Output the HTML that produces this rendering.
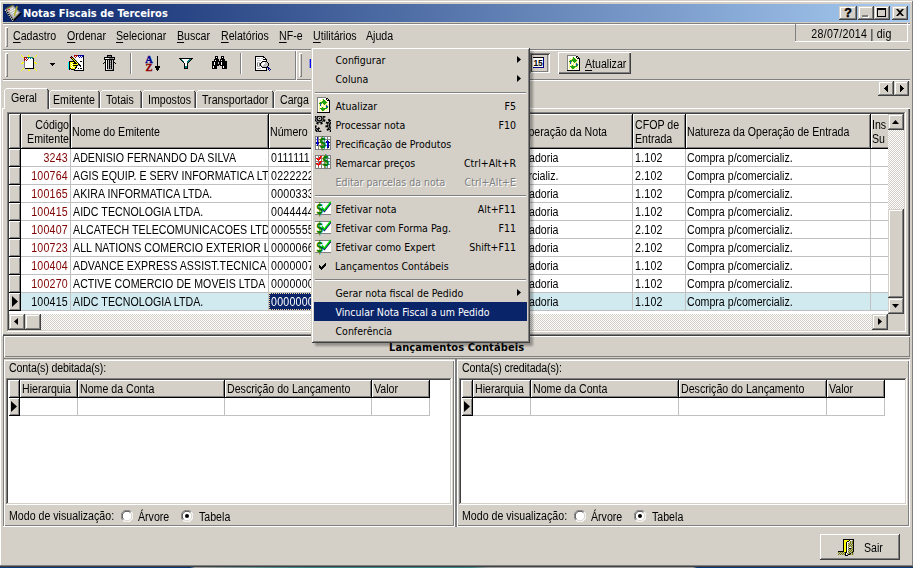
<!DOCTYPE html><html><head><meta charset="utf-8"><title>Notas Fiscais de Terceiros</title><style>
html,body{margin:0;padding:0;background:#d4d0c8;}
body{width:913px;height:568px;position:relative;overflow:hidden;font:11px "Liberation Sans",sans-serif;color:#000;}
div{position:absolute;box-sizing:border-box;white-space:nowrap;}
.ms{font:12px/13px "Liberation Sans",sans-serif;transform:scaleX(.885);transform-origin:0 0;}
.ms.r{transform-origin:100% 0;}
.ms.c{transform-origin:50% 0;}
.th{font:10.5px/13px "DejaVu Sans Condensed","DejaVu Sans",sans-serif;}
.thb{font:bold 11px/13px "DejaVu Sans Condensed","DejaVu Sans",sans-serif;}
.btn{background:#d4d0c8;box-shadow:inset -1px -1px #404040,inset 1px 1px #fff,inset -2px -2px #808080,inset 2px 2px #d4d0c8;}
.sbtn{background:#d4d0c8;box-shadow:inset -1px -1px #404040,inset 1px 1px #d4d0c8,inset -2px -2px #808080,inset 2px 2px #fff;}
.sunk{box-shadow:inset -1px -1px #fff,inset 1px 1px #808080,inset -2px -2px #d4d0c8,inset 2px 2px #404040;}
.sunk1{box-shadow:inset -1px -1px #fff,inset 1px 1px #808080;}
.rais1{box-shadow:inset -1px -1px #808080,inset 1px 1px #fff;}
.dither{background-color:#fff;background-image:conic-gradient(#d4d0c8 25%,#fff 0 50%,#d4d0c8 0 75%,#fff 0);background-size:2px 2px;}
.hc{background:#d4d0c8;box-shadow:inset 1px 1px #fff,inset -1px -1px #808080;}
u{text-decoration:underline;text-underline-offset:2px;}
</style></head><body>
<div style="left:0px;top:1px;width:912px;height:1px;background:#fff;"></div>
<div style="left:0px;top:1px;width:1px;height:564px;background:#fff;"></div>
<div style="left:912px;top:1px;width:1px;height:565px;background:#808080;"></div>
<div style="left:0px;top:565px;width:913px;height:1px;background:#808080;"></div>
<div style="left:0px;top:566px;width:913px;height:1px;background:#404040;"></div>
<div style="left:0px;top:567px;width:913px;height:1px;background:linear-gradient(90deg,#0a3a7a 0,#0a3a7a 190px,#a0a0a0 195px,#3a8a8a 300px,#3a8a8a 470px,#a0a0a0 490px,#a0a0a0 693px,#0a3a7a 697px);"></div>
<div style="left:3px;top:4px;width:907px;height:18px;background:linear-gradient(90deg,#0a246a,#a6caf0);"></div>
<div class="thb" style="left:23px;top:7px;color:#fff;">Notas Fiscais de Terceiros</div>
<svg style="position:absolute;left:4px;top:4px" width="18" height="18" viewBox="4 4 18 18"><polygon points="5,9.3 13,5 21,13 13.2,21" fill="#8c8c8c"/><polygon points="7,9.5 13,6.3 19.3,12.8 13.3,18.6" fill="#b8b8b8"/><path d="M8.5 10.5L13 8M10 12l5-2.8M11.5 13.6l5-2.8M13 15.2l4.6-2.6" stroke="#fff" stroke-width="0.9"/><path d="M13.2 21L21 13" stroke="#000" stroke-width="1.6"/><path d="M5.3 9.8L13 20.6" stroke="#000" stroke-width="1.8"/><path d="M5.3 9.8L13 20.6" stroke="#fff" stroke-width="1.6" stroke-dasharray="1 1.1"/><path d="M6 8.6L13 5" stroke="#707000" stroke-width="1"/><path d="M17.2 6.2L14.3 15.8" stroke="#b0b020" stroke-width="1.5"/><rect x="8" y="9" width="2" height="1.2" fill="#ff3030"/></svg>
<div class="sbtn" style="left:839px;top:6px;width:18px;height:14px;"></div>
<div class="sbtn" style="left:858px;top:6px;width:16px;height:14px;"></div>
<div class="sbtn" style="left:874px;top:6px;width:16px;height:14px;"></div>
<div class="sbtn" style="left:892px;top:6px;width:16px;height:14px;"></div>
<div class="x" style="left:839px;top:6px;font:bold 12.5px/14px Liberation Sans,sans-serif;width:18px;text-align:center;-webkit-text-stroke:0.4px #000;">?</div>
<div style="left:863px;top:16px;width:6px;height:2px;background:#fff;"></div>
<div style="left:862px;top:15px;width:6px;height:2px;background:#808080;"></div>
<div style="left:877px;top:8px;width:9px;height:9px;border:1px solid #000;border-top-width:2px;"></div>
<svg style="position:absolute;left:896px;top:9px" width="8" height="7" viewBox="0 0 8 7"><path d="M0 0h2l2 2 2-2h2v0L5 3.5 8 7H6L4 5 2 7H0l3-3.5z" fill="#000"/></svg>
<div style="left:3px;top:23px;width:907px;height:1px;background:#808080;"></div>
<div style="left:3px;top:24px;width:907px;height:1px;background:#fff;"></div>
<div style="left:5px;top:27px;width:3px;height:20px;box-shadow:inset 1px 1px #fff,inset -1px -1px #808080;"></div>
<div class="ms" style="left:13px;top:30px;"><u>C</u>adastro</div>
<div class="ms" style="left:67px;top:30px;"><u>O</u>rdenar</div>
<div class="ms" style="left:116px;top:30px;"><u>S</u>elecionar</div>
<div class="ms" style="left:177px;top:30px;"><u>B</u>uscar</div>
<div class="ms" style="left:221px;top:30px;"><u>R</u>elatórios</div>
<div class="ms" style="left:279px;top:30px;"><u>N</u>F-e</div>
<div class="ms" style="left:313px;top:30px;"><u>U</u>tilitários</div>
<div class="ms" style="left:366px;top:30px;">Ajuda</div>
<div class="sunk1" style="left:795px;top:23px;width:113px;height:19px;"></div>
<div class="ms c" style="left:795px;top:28px;width:113px;text-align:center;letter-spacing:0.3px;">28/07/2014 | dig</div>
<div style="left:3px;top:49px;width:907px;height:1px;background:#808080;"></div>
<div style="left:3px;top:50px;width:907px;height:1px;background:#fff;"></div>
<div style="left:5px;top:53px;width:3px;height:24px;box-shadow:inset 1px 1px #fff,inset -1px -1px #808080;"></div>
<div style="left:3px;top:79px;width:907px;height:1px;background:#808080;"></div>
<div style="left:3px;top:80px;width:907px;height:1px;background:#fff;"></div>
<svg style="position:absolute;left:21px;top:55px" width="16" height="16" viewBox="0 0 16 16" shape-rendering="crispEdges"><rect x="0" y="0" width="1" height="1" fill="#ffff00"/><rect x="7" y="0" width="1" height="1" fill="#ffff00"/><rect x="15" y="0" width="1" height="1" fill="#ffff00"/><rect x="1" y="1" width="1" height="1" fill="#ffff00"/><rect x="7" y="1" width="2" height="1" fill="#ffff00"/><rect x="14" y="1" width="1" height="1" fill="#ffff00"/><rect x="2" y="2" width="1" height="1" fill="#ffff00"/><rect x="3" y="2" width="3" height="1" fill="#a00000"/><rect x="6" y="2" width="6" height="1" fill="#008080"/><rect x="12" y="2" width="1" height="1" fill="#ffff00"/><rect x="3" y="3" width="1" height="1" fill="#a00000"/><rect x="4" y="3" width="1" height="1" fill="#fff"/><rect x="5" y="3" width="1" height="1" fill="#a00000"/><rect x="6" y="3" width="1" height="1" fill="#fff"/><rect x="7" y="3" width="1" height="1" fill="#008080"/><rect x="8" y="3" width="1" height="1" fill="#fff"/><rect x="9" y="3" width="1" height="1" fill="#008080"/><rect x="10" y="3" width="1" height="1" fill="#fff"/><rect x="11" y="3" width="1" height="1" fill="#008080"/><rect x="12" y="3" width="1" height="1" fill="#000"/><rect x="3" y="4" width="2" height="1" fill="#a00000"/><rect x="5" y="4" width="1" height="1" fill="#fff"/><rect x="6" y="4" width="1" height="1" fill="#a00000"/><rect x="7" y="4" width="5" height="1" fill="#fff"/><rect x="12" y="4" width="1" height="1" fill="#000"/><rect x="3" y="5" width="1" height="1" fill="#a00000"/><rect x="4" y="5" width="1" height="1" fill="#fff"/><rect x="5" y="5" width="1" height="1" fill="#a00000"/><rect x="6" y="5" width="6" height="1" fill="#fff"/><rect x="12" y="5" width="1" height="1" fill="#000"/><rect x="3" y="6" width="1" height="1" fill="#808080"/><rect x="4" y="6" width="8" height="1" fill="#fff"/><rect x="12" y="6" width="1" height="1" fill="#000"/><rect x="1" y="7" width="2" height="1" fill="#ffff00"/><rect x="3" y="7" width="1" height="1" fill="#808080"/><rect x="4" y="7" width="8" height="1" fill="#fff"/><rect x="12" y="7" width="1" height="1" fill="#000"/><rect x="13" y="7" width="2" height="1" fill="#ffff00"/><rect x="0" y="8" width="2" height="1" fill="#ffff00"/><rect x="3" y="8" width="1" height="1" fill="#808080"/><rect x="4" y="8" width="8" height="1" fill="#fff"/><rect x="12" y="8" width="1" height="1" fill="#000"/><rect x="14" y="8" width="2" height="1" fill="#ffff00"/><rect x="3" y="9" width="1" height="1" fill="#808080"/><rect x="4" y="9" width="8" height="1" fill="#fff"/><rect x="12" y="9" width="1" height="1" fill="#000"/><rect x="3" y="10" width="1" height="1" fill="#808080"/><rect x="4" y="10" width="8" height="1" fill="#fff"/><rect x="12" y="10" width="1" height="1" fill="#000"/><rect x="3" y="11" width="1" height="1" fill="#808080"/><rect x="4" y="11" width="8" height="1" fill="#fff"/><rect x="12" y="11" width="1" height="1" fill="#000"/><rect x="3" y="12" width="1" height="1" fill="#808080"/><rect x="4" y="12" width="8" height="1" fill="#fff"/><rect x="12" y="12" width="1" height="1" fill="#000"/><rect x="2" y="13" width="1" height="1" fill="#ffff00"/><rect x="4" y="13" width="9" height="1" fill="#000"/><rect x="13" y="13" width="1" height="1" fill="#ffff00"/><rect x="1" y="14" width="1" height="1" fill="#ffff00"/><rect x="7" y="14" width="1" height="1" fill="#ffff00"/><rect x="14" y="14" width="1" height="1" fill="#ffff00"/><rect x="0" y="15" width="1" height="1" fill="#ffff00"/><rect x="7" y="15" width="2" height="1" fill="#ffff00"/><rect x="15" y="15" width="1" height="1" fill="#ffff00"/></svg>
<svg style="position:absolute;left:50px;top:63px" width="5" height="3" viewBox="0 0 5 3" shape-rendering="crispEdges"><rect x="0" y="0" width="5" height="1" fill="#000"/><rect x="1" y="1" width="3" height="1" fill="#000"/><rect x="2" y="2" width="1" height="1" fill="#000"/></svg>
<svg style="position:absolute;left:68px;top:55px" width="16" height="16" viewBox="0 0 16 16" shape-rendering="crispEdges"><rect x="6" y="0" width="4" height="1" fill="#a00000"/><rect x="10" y="0" width="6" height="1" fill="#0000a0"/><rect x="3" y="1" width="1" height="1" fill="#000"/><rect x="6" y="1" width="1" height="1" fill="#a00000"/><rect x="7" y="1" width="1" height="1" fill="#fff"/><rect x="8" y="1" width="1" height="1" fill="#a00000"/><rect x="9" y="1" width="1" height="1" fill="#fff"/><rect x="10" y="1" width="1" height="1" fill="#0000a0"/><rect x="11" y="1" width="1" height="1" fill="#fff"/><rect x="12" y="1" width="1" height="1" fill="#0000a0"/><rect x="13" y="1" width="1" height="1" fill="#fff"/><rect x="14" y="1" width="1" height="1" fill="#0000a0"/><rect x="15" y="1" width="1" height="1" fill="#000"/><rect x="2" y="2" width="1" height="1" fill="#000"/><rect x="3" y="2" width="1" height="1" fill="#ff0000"/><rect x="4" y="2" width="1" height="1" fill="#000"/><rect x="6" y="2" width="1" height="1" fill="#fff"/><rect x="7" y="2" width="1" height="1" fill="#a00000"/><rect x="8" y="2" width="3" height="1" fill="#fff"/><rect x="11" y="2" width="1" height="1" fill="#0000a0"/><rect x="12" y="2" width="1" height="1" fill="#fff"/><rect x="13" y="2" width="1" height="1" fill="#0000a0"/><rect x="14" y="2" width="1" height="1" fill="#fff"/><rect x="15" y="2" width="1" height="1" fill="#000"/><rect x="3" y="3" width="1" height="1" fill="#000"/><rect x="4" y="3" width="1" height="1" fill="#ffff00"/><rect x="5" y="3" width="1" height="1" fill="#000"/><rect x="7" y="3" width="8" height="1" fill="#fff"/><rect x="15" y="3" width="1" height="1" fill="#000"/><rect x="4" y="4" width="1" height="1" fill="#000"/><rect x="5" y="4" width="1" height="1" fill="#ffff00"/><rect x="6" y="4" width="1" height="1" fill="#000"/><rect x="8" y="4" width="7" height="1" fill="#fff"/><rect x="15" y="4" width="1" height="1" fill="#000"/><rect x="5" y="5" width="1" height="1" fill="#000"/><rect x="6" y="5" width="1" height="1" fill="#ffff00"/><rect x="7" y="5" width="1" height="1" fill="#000"/><rect x="9" y="5" width="6" height="1" fill="#fff"/><rect x="15" y="5" width="1" height="1" fill="#000"/><rect x="1" y="6" width="6" height="1" fill="#000"/><rect x="7" y="6" width="1" height="1" fill="#ffff00"/><rect x="8" y="6" width="1" height="1" fill="#000"/><rect x="9" y="6" width="3" height="1" fill="#fff"/><rect x="12" y="6" width="2" height="1" fill="#000"/><rect x="14" y="6" width="1" height="1" fill="#fff"/><rect x="15" y="6" width="1" height="1" fill="#000"/><rect x="0" y="7" width="1" height="1" fill="#00ffff"/><rect x="1" y="7" width="1" height="1" fill="#000"/><rect x="2" y="7" width="4" height="1" fill="#ffff00"/><rect x="6" y="7" width="2" height="1" fill="#000"/><rect x="8" y="7" width="1" height="1" fill="#ffff00"/><rect x="9" y="7" width="1" height="1" fill="#000"/><rect x="10" y="7" width="5" height="1" fill="#fff"/><rect x="15" y="7" width="1" height="1" fill="#000"/><rect x="0" y="8" width="1" height="1" fill="#00ffff"/><rect x="1" y="8" width="1" height="1" fill="#000"/><rect x="2" y="8" width="1" height="1" fill="#ffff00"/><rect x="3" y="8" width="1" height="1" fill="#fff"/><rect x="4" y="8" width="1" height="1" fill="#ffff00"/><rect x="5" y="8" width="4" height="1" fill="#000"/><rect x="9" y="8" width="1" height="1" fill="#ffff00"/><rect x="10" y="8" width="1" height="1" fill="#000"/><rect x="11" y="8" width="4" height="1" fill="#fff"/><rect x="15" y="8" width="1" height="1" fill="#000"/><rect x="0" y="9" width="1" height="1" fill="#00ffff"/><rect x="1" y="9" width="1" height="1" fill="#000"/><rect x="2" y="9" width="2" height="1" fill="#ffff00"/><rect x="4" y="9" width="1" height="1" fill="#fff"/><rect x="5" y="9" width="5" height="1" fill="#ffff00"/><rect x="10" y="9" width="2" height="1" fill="#000"/><rect x="12" y="9" width="3" height="1" fill="#fff"/><rect x="15" y="9" width="1" height="1" fill="#000"/><rect x="0" y="10" width="1" height="1" fill="#00ffff"/><rect x="1" y="10" width="1" height="1" fill="#000"/><rect x="2" y="10" width="1" height="1" fill="#ffff00"/><rect x="3" y="10" width="1" height="1" fill="#fff"/><rect x="4" y="10" width="1" height="1" fill="#ffff00"/><rect x="5" y="10" width="5" height="1" fill="#000"/><rect x="11" y="10" width="2" height="1" fill="#000"/><rect x="13" y="10" width="2" height="1" fill="#fff"/><rect x="15" y="10" width="1" height="1" fill="#000"/><rect x="0" y="11" width="1" height="1" fill="#00ffff"/><rect x="1" y="11" width="1" height="1" fill="#000"/><rect x="2" y="11" width="2" height="1" fill="#ffff00"/><rect x="4" y="11" width="1" height="1" fill="#fff"/><rect x="5" y="11" width="3" height="1" fill="#ffff00"/><rect x="8" y="11" width="1" height="1" fill="#000"/><rect x="9" y="11" width="3" height="1" fill="#fff"/><rect x="12" y="11" width="1" height="1" fill="#000"/><rect x="13" y="11" width="2" height="1" fill="#fff"/><rect x="15" y="11" width="1" height="1" fill="#000"/><rect x="0" y="12" width="1" height="1" fill="#00ffff"/><rect x="1" y="12" width="1" height="1" fill="#000"/><rect x="2" y="12" width="1" height="1" fill="#ffff00"/><rect x="3" y="12" width="1" height="1" fill="#fff"/><rect x="4" y="12" width="1" height="1" fill="#ffff00"/><rect x="5" y="12" width="1" height="1" fill="#fff"/><rect x="6" y="12" width="1" height="1" fill="#ffff00"/><rect x="7" y="12" width="2" height="1" fill="#000"/><rect x="9" y="12" width="6" height="1" fill="#fff"/><rect x="15" y="12" width="1" height="1" fill="#000"/><rect x="0" y="13" width="1" height="1" fill="#00ffff"/><rect x="1" y="13" width="2" height="1" fill="#000"/><rect x="3" y="13" width="4" height="1" fill="#ffff00"/><rect x="7" y="13" width="1" height="1" fill="#000"/><rect x="8" y="13" width="2" height="1" fill="#fff"/><rect x="10" y="13" width="1" height="1" fill="#000"/><rect x="11" y="13" width="1" height="1" fill="#fff"/><rect x="12" y="13" width="2" height="1" fill="#000"/><rect x="14" y="13" width="1" height="1" fill="#fff"/><rect x="15" y="13" width="1" height="1" fill="#000"/><rect x="1" y="14" width="1" height="1" fill="#000"/><rect x="3" y="14" width="4" height="1" fill="#000"/><rect x="7" y="14" width="8" height="1" fill="#fff"/><rect x="15" y="14" width="1" height="1" fill="#000"/><rect x="6" y="15" width="10" height="1" fill="#000"/></svg>
<svg style="position:absolute;left:103px;top:55px" width="13" height="16" viewBox="0 0 13 16" shape-rendering="crispEdges"><rect x="4" y="0" width="5" height="1" fill="#000"/><rect x="4" y="1" width="1" height="1" fill="#000"/><rect x="5" y="1" width="3" height="1" fill="#808080"/><rect x="8" y="1" width="1" height="1" fill="#000"/><rect x="1" y="2" width="11" height="1" fill="#000"/><rect x="1" y="3" width="1" height="1" fill="#000"/><rect x="2" y="3" width="4" height="1" fill="#fff"/><rect x="6" y="3" width="4" height="1" fill="#808080"/><rect x="10" y="3" width="1" height="1" fill="#c0c0c0"/><rect x="11" y="3" width="1" height="1" fill="#000"/><rect x="1" y="4" width="11" height="1" fill="#000"/><rect x="2" y="5" width="1" height="1" fill="#000"/><rect x="3" y="5" width="1" height="1" fill="#fff"/><rect x="4" y="5" width="1" height="1" fill="#000"/><rect x="5" y="5" width="1" height="1" fill="#c0c0c0"/><rect x="6" y="5" width="1" height="1" fill="#000"/><rect x="7" y="5" width="1" height="1" fill="#808080"/><rect x="8" y="5" width="1" height="1" fill="#000"/><rect x="9" y="5" width="1" height="1" fill="#c0c0c0"/><rect x="10" y="5" width="1" height="1" fill="#000"/><rect x="2" y="6" width="1" height="1" fill="#000"/><rect x="3" y="6" width="1" height="1" fill="#fff"/><rect x="4" y="6" width="1" height="1" fill="#000"/><rect x="5" y="6" width="1" height="1" fill="#c0c0c0"/><rect x="6" y="6" width="1" height="1" fill="#000"/><rect x="7" y="6" width="1" height="1" fill="#c0c0c0"/><rect x="8" y="6" width="1" height="1" fill="#000"/><rect x="9" y="6" width="1" height="1" fill="#c0c0c0"/><rect x="10" y="6" width="1" height="1" fill="#000"/><rect x="1" y="7" width="2" height="1" fill="#000"/><rect x="3" y="7" width="1" height="1" fill="#fff"/><rect x="4" y="7" width="1" height="1" fill="#000"/><rect x="5" y="7" width="1" height="1" fill="#c0c0c0"/><rect x="6" y="7" width="1" height="1" fill="#000"/><rect x="7" y="7" width="1" height="1" fill="#808080"/><rect x="8" y="7" width="1" height="1" fill="#000"/><rect x="9" y="7" width="1" height="1" fill="#c0c0c0"/><rect x="10" y="7" width="2" height="1" fill="#000"/><rect x="0" y="8" width="1" height="1" fill="#000"/><rect x="2" y="8" width="1" height="1" fill="#000"/><rect x="3" y="8" width="1" height="1" fill="#fff"/><rect x="4" y="8" width="1" height="1" fill="#000"/><rect x="5" y="8" width="1" height="1" fill="#c0c0c0"/><rect x="6" y="8" width="1" height="1" fill="#000"/><rect x="7" y="8" width="1" height="1" fill="#c0c0c0"/><rect x="8" y="8" width="1" height="1" fill="#000"/><rect x="9" y="8" width="1" height="1" fill="#c0c0c0"/><rect x="10" y="8" width="1" height="1" fill="#000"/><rect x="12" y="8" width="1" height="1" fill="#000"/><rect x="2" y="9" width="1" height="1" fill="#000"/><rect x="3" y="9" width="1" height="1" fill="#fff"/><rect x="4" y="9" width="1" height="1" fill="#000"/><rect x="5" y="9" width="1" height="1" fill="#c0c0c0"/><rect x="6" y="9" width="1" height="1" fill="#000"/><rect x="7" y="9" width="1" height="1" fill="#808080"/><rect x="8" y="9" width="1" height="1" fill="#000"/><rect x="9" y="9" width="1" height="1" fill="#c0c0c0"/><rect x="10" y="9" width="1" height="1" fill="#000"/><rect x="2" y="10" width="1" height="1" fill="#000"/><rect x="3" y="10" width="1" height="1" fill="#fff"/><rect x="4" y="10" width="1" height="1" fill="#000"/><rect x="5" y="10" width="1" height="1" fill="#c0c0c0"/><rect x="6" y="10" width="1" height="1" fill="#000"/><rect x="7" y="10" width="1" height="1" fill="#c0c0c0"/><rect x="8" y="10" width="1" height="1" fill="#000"/><rect x="9" y="10" width="1" height="1" fill="#c0c0c0"/><rect x="10" y="10" width="1" height="1" fill="#000"/><rect x="2" y="11" width="1" height="1" fill="#000"/><rect x="3" y="11" width="1" height="1" fill="#fff"/><rect x="4" y="11" width="1" height="1" fill="#000"/><rect x="5" y="11" width="1" height="1" fill="#c0c0c0"/><rect x="6" y="11" width="1" height="1" fill="#000"/><rect x="7" y="11" width="1" height="1" fill="#808080"/><rect x="8" y="11" width="1" height="1" fill="#000"/><rect x="9" y="11" width="1" height="1" fill="#c0c0c0"/><rect x="10" y="11" width="1" height="1" fill="#000"/><rect x="2" y="12" width="1" height="1" fill="#000"/><rect x="3" y="12" width="1" height="1" fill="#fff"/><rect x="4" y="12" width="1" height="1" fill="#000"/><rect x="5" y="12" width="1" height="1" fill="#c0c0c0"/><rect x="6" y="12" width="1" height="1" fill="#000"/><rect x="7" y="12" width="1" height="1" fill="#c0c0c0"/><rect x="8" y="12" width="1" height="1" fill="#000"/><rect x="9" y="12" width="1" height="1" fill="#c0c0c0"/><rect x="10" y="12" width="1" height="1" fill="#000"/><rect x="2" y="13" width="1" height="1" fill="#000"/><rect x="3" y="13" width="1" height="1" fill="#fff"/><rect x="4" y="13" width="1" height="1" fill="#000"/><rect x="5" y="13" width="1" height="1" fill="#c0c0c0"/><rect x="6" y="13" width="1" height="1" fill="#000"/><rect x="7" y="13" width="1" height="1" fill="#808080"/><rect x="8" y="13" width="1" height="1" fill="#000"/><rect x="9" y="13" width="1" height="1" fill="#c0c0c0"/><rect x="10" y="13" width="1" height="1" fill="#000"/><rect x="2" y="14" width="1" height="1" fill="#000"/><rect x="3" y="14" width="1" height="1" fill="#fff"/><rect x="4" y="14" width="5" height="1" fill="#c0c0c0"/><rect x="9" y="14" width="1" height="1" fill="#808080"/><rect x="10" y="14" width="1" height="1" fill="#000"/><rect x="2" y="15" width="9" height="1" fill="#000"/></svg>
<div style="left:130px;top:53px;width:1px;height:21px;background:#808080;"></div>
<div style="left:131px;top:53px;width:1px;height:21px;background:#fff;"></div>
<svg style="position:absolute;left:144px;top:54px;overflow:visible" width="18" height="18" viewBox="0 0 18 18"><text x="1.3" y="8.6" font-family="Liberation Serif,serif" font-weight="bold" font-size="10.5" fill="#000090" stroke="#000090" stroke-width="0.35">A</text><text x="1.6" y="16.6" font-family="Liberation Serif,serif" font-weight="bold" font-size="10.5" fill="#900000" stroke="#900000" stroke-width="0.35">Z</text></svg>
<svg style="position:absolute;left:155px;top:56px" width="5" height="15" viewBox="0 0 5 15" shape-rendering="crispEdges"><rect x="2" y="0" width="1" height="1" fill="#000"/><rect x="2" y="1" width="1" height="1" fill="#000"/><rect x="2" y="2" width="1" height="1" fill="#000"/><rect x="2" y="3" width="1" height="1" fill="#000"/><rect x="2" y="4" width="1" height="1" fill="#000"/><rect x="2" y="5" width="1" height="1" fill="#000"/><rect x="2" y="6" width="1" height="1" fill="#000"/><rect x="2" y="7" width="1" height="1" fill="#000"/><rect x="2" y="8" width="1" height="1" fill="#000"/><rect x="2" y="9" width="1" height="1" fill="#000"/><rect x="0" y="10" width="5" height="1" fill="#000"/><rect x="0" y="11" width="5" height="1" fill="#000"/><rect x="1" y="12" width="3" height="1" fill="#000"/><rect x="1" y="13" width="3" height="1" fill="#000"/><rect x="2" y="14" width="1" height="1" fill="#000"/></svg>
<svg style="position:absolute;left:179px;top:58px" width="14" height="11" viewBox="0 0 14 11" shape-rendering="crispEdges"><rect x="0" y="0" width="14" height="1" fill="#000"/><rect x="1" y="1" width="1" height="1" fill="#000"/><rect x="2" y="1" width="1" height="1" fill="#008080"/><rect x="3" y="1" width="7" height="1" fill="#fff"/><rect x="10" y="1" width="2" height="1" fill="#008080"/><rect x="12" y="1" width="1" height="1" fill="#000"/><rect x="2" y="2" width="1" height="1" fill="#000"/><rect x="3" y="2" width="1" height="1" fill="#008080"/><rect x="4" y="2" width="5" height="1" fill="#fff"/><rect x="9" y="2" width="2" height="1" fill="#008080"/><rect x="11" y="2" width="1" height="1" fill="#000"/><rect x="3" y="3" width="1" height="1" fill="#000"/><rect x="4" y="3" width="1" height="1" fill="#008080"/><rect x="5" y="3" width="3" height="1" fill="#fff"/><rect x="8" y="3" width="2" height="1" fill="#008080"/><rect x="10" y="3" width="1" height="1" fill="#000"/><rect x="4" y="4" width="1" height="1" fill="#000"/><rect x="5" y="4" width="3" height="1" fill="#fff"/><rect x="8" y="4" width="1" height="1" fill="#008080"/><rect x="9" y="4" width="1" height="1" fill="#000"/><rect x="5" y="5" width="1" height="1" fill="#000"/><rect x="6" y="5" width="2" height="1" fill="#fff"/><rect x="8" y="5" width="1" height="1" fill="#000"/><rect x="5" y="6" width="1" height="1" fill="#000"/><rect x="6" y="6" width="2" height="1" fill="#fff"/><rect x="8" y="6" width="1" height="1" fill="#000"/><rect x="5" y="7" width="1" height="1" fill="#000"/><rect x="6" y="7" width="2" height="1" fill="#fff"/><rect x="8" y="7" width="1" height="1" fill="#000"/><rect x="5" y="8" width="1" height="1" fill="#000"/><rect x="6" y="8" width="2" height="1" fill="#008080"/><rect x="8" y="8" width="1" height="1" fill="#000"/><rect x="5" y="9" width="1" height="1" fill="#000"/><rect x="6" y="9" width="2" height="1" fill="#008080"/><rect x="8" y="9" width="1" height="1" fill="#000"/><rect x="5" y="10" width="4" height="1" fill="#000"/></svg>
<svg style="position:absolute;left:212px;top:56px" width="15" height="13" viewBox="0 0 15 13" shape-rendering="crispEdges"><rect x="3" y="0" width="3" height="1" fill="#000"/><rect x="9" y="0" width="3" height="1" fill="#000"/><rect x="3" y="1" width="1" height="1" fill="#000"/><rect x="4" y="1" width="1" height="1" fill="#fff"/><rect x="5" y="1" width="1" height="1" fill="#000"/><rect x="9" y="1" width="1" height="1" fill="#000"/><rect x="10" y="1" width="1" height="1" fill="#fff"/><rect x="11" y="1" width="1" height="1" fill="#000"/><rect x="3" y="2" width="3" height="1" fill="#000"/><rect x="9" y="2" width="3" height="1" fill="#000"/><rect x="2" y="3" width="5" height="1" fill="#000"/><rect x="8" y="3" width="5" height="1" fill="#000"/><rect x="2" y="4" width="1" height="1" fill="#000"/><rect x="3" y="4" width="1" height="1" fill="#fff"/><rect x="4" y="4" width="3" height="1" fill="#000"/><rect x="8" y="4" width="1" height="1" fill="#000"/><rect x="9" y="4" width="1" height="1" fill="#fff"/><rect x="10" y="4" width="3" height="1" fill="#000"/><rect x="0" y="5" width="15" height="1" fill="#000"/><rect x="0" y="6" width="2" height="1" fill="#000"/><rect x="2" y="6" width="1" height="1" fill="#fff"/><rect x="3" y="6" width="3" height="1" fill="#000"/><rect x="6" y="6" width="1" height="1" fill="#c0c0c0"/><rect x="7" y="6" width="2" height="1" fill="#000"/><rect x="9" y="6" width="1" height="1" fill="#fff"/><rect x="10" y="6" width="5" height="1" fill="#000"/><rect x="0" y="7" width="2" height="1" fill="#000"/><rect x="2" y="7" width="1" height="1" fill="#fff"/><rect x="3" y="7" width="3" height="1" fill="#000"/><rect x="6" y="7" width="1" height="1" fill="#c0c0c0"/><rect x="7" y="7" width="2" height="1" fill="#000"/><rect x="9" y="7" width="1" height="1" fill="#fff"/><rect x="10" y="7" width="5" height="1" fill="#000"/><rect x="0" y="8" width="2" height="1" fill="#000"/><rect x="2" y="8" width="1" height="1" fill="#fff"/><rect x="3" y="8" width="6" height="1" fill="#000"/><rect x="9" y="8" width="1" height="1" fill="#fff"/><rect x="10" y="8" width="5" height="1" fill="#000"/><rect x="0" y="9" width="7" height="1" fill="#000"/><rect x="8" y="9" width="7" height="1" fill="#000"/><rect x="0" y="10" width="1" height="1" fill="#000"/><rect x="1" y="10" width="1" height="1" fill="#fff"/><rect x="2" y="10" width="3" height="1" fill="#000"/><rect x="10" y="10" width="1" height="1" fill="#000"/><rect x="11" y="10" width="1" height="1" fill="#fff"/><rect x="12" y="10" width="3" height="1" fill="#000"/><rect x="0" y="11" width="1" height="1" fill="#000"/><rect x="1" y="11" width="1" height="1" fill="#fff"/><rect x="2" y="11" width="3" height="1" fill="#000"/><rect x="10" y="11" width="1" height="1" fill="#000"/><rect x="11" y="11" width="1" height="1" fill="#fff"/><rect x="12" y="11" width="3" height="1" fill="#000"/><rect x="0" y="12" width="5" height="1" fill="#000"/><rect x="10" y="12" width="5" height="1" fill="#000"/></svg>
<div style="left:240px;top:53px;width:1px;height:21px;background:#808080;"></div>
<div style="left:241px;top:53px;width:1px;height:21px;background:#fff;"></div>
<svg style="position:absolute;left:255px;top:56px" width="16" height="15" viewBox="0 0 16 15" shape-rendering="crispEdges"><rect x="0" y="0" width="9" height="1" fill="#000"/><rect x="0" y="1" width="1" height="1" fill="#000"/><rect x="1" y="1" width="7" height="1" fill="#fff"/><rect x="8" y="1" width="2" height="1" fill="#000"/><rect x="0" y="2" width="1" height="1" fill="#000"/><rect x="1" y="2" width="1" height="1" fill="#fff"/><rect x="2" y="2" width="3" height="1" fill="#c0c0c0"/><rect x="5" y="2" width="1" height="1" fill="#fff"/><rect x="6" y="2" width="2" height="1" fill="#c0c0c0"/><rect x="8" y="2" width="2" height="1" fill="#fff"/><rect x="10" y="2" width="1" height="1" fill="#000"/><rect x="0" y="3" width="1" height="1" fill="#000"/><rect x="1" y="3" width="7" height="1" fill="#fff"/><rect x="8" y="3" width="4" height="1" fill="#000"/><rect x="0" y="4" width="1" height="1" fill="#000"/><rect x="1" y="4" width="1" height="1" fill="#fff"/><rect x="2" y="4" width="4" height="1" fill="#c0c0c0"/><rect x="6" y="4" width="5" height="1" fill="#fff"/><rect x="11" y="4" width="1" height="1" fill="#000"/><rect x="0" y="5" width="1" height="1" fill="#000"/><rect x="1" y="5" width="6" height="1" fill="#fff"/><rect x="7" y="5" width="5" height="1" fill="#000"/><rect x="0" y="6" width="1" height="1" fill="#000"/><rect x="1" y="6" width="1" height="1" fill="#fff"/><rect x="2" y="6" width="3" height="1" fill="#c0c0c0"/><rect x="5" y="6" width="1" height="1" fill="#fff"/><rect x="6" y="6" width="1" height="1" fill="#000"/><rect x="7" y="6" width="1" height="1" fill="#c0c0c0"/><rect x="8" y="6" width="2" height="1" fill="#fff"/><rect x="10" y="6" width="2" height="1" fill="#c0c0c0"/><rect x="12" y="6" width="1" height="1" fill="#000"/><rect x="0" y="7" width="1" height="1" fill="#000"/><rect x="1" y="7" width="1" height="1" fill="#fff"/><rect x="2" y="7" width="1" height="1" fill="#808080"/><rect x="3" y="7" width="1" height="1" fill="#fff"/><rect x="4" y="7" width="1" height="1" fill="#808080"/><rect x="5" y="7" width="1" height="1" fill="#000"/><rect x="6" y="7" width="1" height="1" fill="#c0c0c0"/><rect x="7" y="7" width="3" height="1" fill="#fff"/><rect x="10" y="7" width="3" height="1" fill="#c0c0c0"/><rect x="13" y="7" width="1" height="1" fill="#000"/><rect x="0" y="8" width="1" height="1" fill="#000"/><rect x="1" y="8" width="1" height="1" fill="#fff"/><rect x="2" y="8" width="1" height="1" fill="#808080"/><rect x="3" y="8" width="1" height="1" fill="#fff"/><rect x="4" y="8" width="1" height="1" fill="#808080"/><rect x="5" y="8" width="1" height="1" fill="#000"/><rect x="6" y="8" width="3" height="1" fill="#fff"/><rect x="9" y="8" width="4" height="1" fill="#c0c0c0"/><rect x="13" y="8" width="1" height="1" fill="#000"/><rect x="0" y="9" width="1" height="1" fill="#000"/><rect x="1" y="9" width="1" height="1" fill="#fff"/><rect x="2" y="9" width="1" height="1" fill="#808080"/><rect x="3" y="9" width="1" height="1" fill="#fff"/><rect x="4" y="9" width="1" height="1" fill="#808080"/><rect x="5" y="9" width="1" height="1" fill="#000"/><rect x="6" y="9" width="1" height="1" fill="#c0c0c0"/><rect x="7" y="9" width="1" height="1" fill="#fff"/><rect x="8" y="9" width="5" height="1" fill="#c0c0c0"/><rect x="13" y="9" width="1" height="1" fill="#000"/><rect x="0" y="10" width="1" height="1" fill="#000"/><rect x="1" y="10" width="1" height="1" fill="#fff"/><rect x="2" y="10" width="3" height="1" fill="#c0c0c0"/><rect x="5" y="10" width="1" height="1" fill="#fff"/><rect x="6" y="10" width="1" height="1" fill="#000"/><rect x="7" y="10" width="5" height="1" fill="#c0c0c0"/><rect x="12" y="10" width="1" height="1" fill="#000"/><rect x="0" y="11" width="1" height="1" fill="#000"/><rect x="1" y="11" width="6" height="1" fill="#fff"/><rect x="7" y="11" width="5" height="1" fill="#000"/><rect x="12" y="11" width="2" height="1" fill="#000080"/><rect x="0" y="12" width="1" height="1" fill="#000"/><rect x="1" y="12" width="1" height="1" fill="#fff"/><rect x="2" y="12" width="4" height="1" fill="#c0c0c0"/><rect x="6" y="12" width="5" height="1" fill="#fff"/><rect x="11" y="12" width="1" height="1" fill="#000"/><rect x="13" y="12" width="2" height="1" fill="#000080"/><rect x="0" y="13" width="1" height="1" fill="#000"/><rect x="1" y="13" width="10" height="1" fill="#fff"/><rect x="11" y="13" width="1" height="1" fill="#000"/><rect x="13" y="13" width="1" height="1" fill="#000080"/><rect x="15" y="13" width="1" height="1" fill="#000080"/><rect x="0" y="14" width="12" height="1" fill="#000"/><rect x="14" y="14" width="1" height="1" fill="#000080"/></svg>
<div style="left:295px;top:51px;width:1px;height:28px;background:#808080;"></div>
<div style="left:296px;top:51px;width:1px;height:29px;background:#fff;"></div>
<div style="left:299px;top:53px;width:3px;height:24px;box-shadow:inset 1px 1px #fff,inset -1px -1px #808080;"></div>
<div class="ms" style="left:308.5px;top:58px;color:#0000ff;font-weight:bold;">F</div>
<div style="left:530px;top:53px;width:20px;height:20px;box-shadow:inset 1px 1px #808080,inset -1px -1px #fff,inset 2px 2px #404040;"></div>
<div style="left:547px;top:55px;width:1px;height:17px;background:#808080;"></div>
<div style="left:532px;top:71px;width:16px;height:1px;background:#808080;"></div>
<div style="left:533px;top:57px;width:11px;height:11px;background:#fff;border-top:1px solid #000;border-right:1px solid #000080;border-bottom:1px solid #000080;"></div>
<div class="x" style="left:533px;top:59px;font:bold 8.5px/9px Liberation Sans,sans-serif;width:10px;text-align:center;letter-spacing:-0.2px;">15</div>
<div style="left:558px;top:52px;width:73px;height:22px;box-shadow:inset 1px 1px #fff,inset -1px -1px #404040,inset -2px -2px #808080;"></div>
<div class="ms" style="left:585px;top:58px;"><u>A</u>tualizar</div>
<svg style="position:absolute;left:567px;top:55px" width="13" height="16" viewBox="0 0 13 16" shape-rendering="crispEdges"><rect x="0" y="0" width="9" height="1" fill="#808080"/><rect x="0" y="1" width="1" height="1" fill="#808080"/><rect x="1" y="1" width="8" height="1" fill="#fff"/><rect x="9" y="1" width="2" height="1" fill="#000"/><rect x="0" y="2" width="1" height="1" fill="#808080"/><rect x="1" y="2" width="4" height="1" fill="#fff"/><rect x="5" y="2" width="1" height="1" fill="#f4f48c"/><rect x="6" y="2" width="1" height="1" fill="#22a412"/><rect x="7" y="2" width="2" height="1" fill="#fff"/><rect x="9" y="2" width="1" height="1" fill="#000"/><rect x="10" y="2" width="1" height="1" fill="#fff"/><rect x="11" y="2" width="1" height="1" fill="#000"/><rect x="0" y="3" width="1" height="1" fill="#808080"/><rect x="1" y="3" width="2" height="1" fill="#fff"/><rect x="3" y="3" width="1" height="1" fill="#f4f48c"/><rect x="4" y="3" width="1" height="1" fill="#fff"/><rect x="5" y="3" width="1" height="1" fill="#f4f48c"/><rect x="6" y="3" width="2" height="1" fill="#22a412"/><rect x="8" y="3" width="1" height="1" fill="#f4f48c"/><rect x="9" y="3" width="1" height="1" fill="#fff"/><rect x="10" y="3" width="3" height="1" fill="#000"/><rect x="0" y="4" width="1" height="1" fill="#808080"/><rect x="1" y="4" width="1" height="1" fill="#fff"/><rect x="2" y="4" width="1" height="1" fill="#f4f48c"/><rect x="3" y="4" width="1" height="1" fill="#fff"/><rect x="4" y="4" width="1" height="1" fill="#f4f48c"/><rect x="5" y="4" width="4" height="1" fill="#22a412"/><rect x="9" y="4" width="1" height="1" fill="#f4f48c"/><rect x="10" y="4" width="2" height="1" fill="#fff"/><rect x="12" y="4" width="1" height="1" fill="#000"/><rect x="0" y="5" width="1" height="1" fill="#808080"/><rect x="1" y="5" width="1" height="1" fill="#fff"/><rect x="2" y="5" width="1" height="1" fill="#f4f48c"/><rect x="3" y="5" width="7" height="1" fill="#22a412"/><rect x="10" y="5" width="1" height="1" fill="#f4f48c"/><rect x="11" y="5" width="1" height="1" fill="#fff"/><rect x="12" y="5" width="1" height="1" fill="#000"/><rect x="0" y="6" width="1" height="1" fill="#808080"/><rect x="1" y="6" width="1" height="1" fill="#fff"/><rect x="2" y="6" width="1" height="1" fill="#22a412"/><rect x="3" y="6" width="1" height="1" fill="#0a5ca8"/><rect x="4" y="6" width="1" height="1" fill="#22a412"/><rect x="5" y="6" width="1" height="1" fill="#f4f48c"/><rect x="6" y="6" width="3" height="1" fill="#22a412"/><rect x="9" y="6" width="1" height="1" fill="#f4f48c"/><rect x="10" y="6" width="2" height="1" fill="#fff"/><rect x="12" y="6" width="1" height="1" fill="#000"/><rect x="0" y="7" width="1" height="1" fill="#808080"/><rect x="1" y="7" width="1" height="1" fill="#fff"/><rect x="2" y="7" width="1" height="1" fill="#f4f48c"/><rect x="3" y="7" width="1" height="1" fill="#0a5ca8"/><rect x="4" y="7" width="1" height="1" fill="#f4f48c"/><rect x="5" y="7" width="1" height="1" fill="#fff"/><rect x="6" y="7" width="1" height="1" fill="#f4f48c"/><rect x="7" y="7" width="1" height="1" fill="#22a412"/><rect x="8" y="7" width="2" height="1" fill="#f4f48c"/><rect x="10" y="7" width="1" height="1" fill="#fff"/><rect x="11" y="7" width="1" height="1" fill="#f4f48c"/><rect x="12" y="7" width="1" height="1" fill="#000"/><rect x="0" y="8" width="1" height="1" fill="#808080"/><rect x="1" y="8" width="1" height="1" fill="#fff"/><rect x="2" y="8" width="1" height="1" fill="#f4f48c"/><rect x="3" y="8" width="1" height="1" fill="#0a5ca8"/><rect x="4" y="8" width="1" height="1" fill="#f4f48c"/><rect x="5" y="8" width="1" height="1" fill="#fff"/><rect x="6" y="8" width="1" height="1" fill="#f4f48c"/><rect x="7" y="8" width="1" height="1" fill="#fff"/><rect x="8" y="8" width="1" height="1" fill="#f4f48c"/><rect x="9" y="8" width="1" height="1" fill="#0a5ca8"/><rect x="10" y="8" width="1" height="1" fill="#f4f48c"/><rect x="11" y="8" width="1" height="1" fill="#fff"/><rect x="12" y="8" width="1" height="1" fill="#000"/><rect x="0" y="9" width="1" height="1" fill="#808080"/><rect x="1" y="9" width="1" height="1" fill="#fff"/><rect x="2" y="9" width="1" height="1" fill="#f4f48c"/><rect x="3" y="9" width="1" height="1" fill="#fff"/><rect x="4" y="9" width="1" height="1" fill="#f4f48c"/><rect x="5" y="9" width="1" height="1" fill="#fff"/><rect x="6" y="9" width="1" height="1" fill="#f4f48c"/><rect x="7" y="9" width="1" height="1" fill="#fff"/><rect x="8" y="9" width="1" height="1" fill="#f4f48c"/><rect x="9" y="9" width="2" height="1" fill="#0a5ca8"/><rect x="11" y="9" width="1" height="1" fill="#f4f48c"/><rect x="12" y="9" width="1" height="1" fill="#000"/><rect x="0" y="10" width="1" height="1" fill="#808080"/><rect x="1" y="10" width="1" height="1" fill="#fff"/><rect x="2" y="10" width="1" height="1" fill="#f4f48c"/><rect x="3" y="10" width="1" height="1" fill="#fff"/><rect x="4" y="10" width="1" height="1" fill="#f4f48c"/><rect x="5" y="10" width="1" height="1" fill="#22a412"/><rect x="6" y="10" width="1" height="1" fill="#f4f48c"/><rect x="7" y="10" width="1" height="1" fill="#fff"/><rect x="8" y="10" width="1" height="1" fill="#f4f48c"/><rect x="9" y="10" width="1" height="1" fill="#0a5ca8"/><rect x="10" y="10" width="1" height="1" fill="#22a412"/><rect x="11" y="10" width="1" height="1" fill="#fff"/><rect x="12" y="10" width="1" height="1" fill="#000"/><rect x="0" y="11" width="1" height="1" fill="#808080"/><rect x="1" y="11" width="1" height="1" fill="#fff"/><rect x="2" y="11" width="1" height="1" fill="#f4f48c"/><rect x="3" y="11" width="7" height="1" fill="#22a412"/><rect x="10" y="11" width="1" height="1" fill="#f4f48c"/><rect x="11" y="11" width="1" height="1" fill="#fff"/><rect x="12" y="11" width="1" height="1" fill="#000"/><rect x="0" y="12" width="1" height="1" fill="#808080"/><rect x="1" y="12" width="1" height="1" fill="#fff"/><rect x="2" y="12" width="1" height="1" fill="#f4f48c"/><rect x="3" y="12" width="1" height="1" fill="#fff"/><rect x="4" y="12" width="4" height="1" fill="#22a412"/><rect x="8" y="12" width="1" height="1" fill="#f4f48c"/><rect x="9" y="12" width="1" height="1" fill="#fff"/><rect x="10" y="12" width="1" height="1" fill="#f4f48c"/><rect x="11" y="12" width="1" height="1" fill="#fff"/><rect x="12" y="12" width="1" height="1" fill="#000"/><rect x="0" y="13" width="1" height="1" fill="#808080"/><rect x="1" y="13" width="1" height="1" fill="#fff"/><rect x="2" y="13" width="1" height="1" fill="#f4f48c"/><rect x="3" y="13" width="1" height="1" fill="#fff"/><rect x="4" y="13" width="1" height="1" fill="#f4f48c"/><rect x="5" y="13" width="2" height="1" fill="#22a412"/><rect x="7" y="13" width="1" height="1" fill="#f4f48c"/><rect x="8" y="13" width="1" height="1" fill="#fff"/><rect x="9" y="13" width="1" height="1" fill="#f4f48c"/><rect x="10" y="13" width="2" height="1" fill="#fff"/><rect x="12" y="13" width="1" height="1" fill="#000"/><rect x="0" y="14" width="1" height="1" fill="#808080"/><rect x="1" y="14" width="4" height="1" fill="#fff"/><rect x="5" y="14" width="1" height="1" fill="#f4f48c"/><rect x="6" y="14" width="6" height="1" fill="#fff"/><rect x="12" y="14" width="1" height="1" fill="#000"/><rect x="0" y="15" width="13" height="1" fill="#000"/></svg>
<div style="left:2px;top:108px;width:908px;height:228px;box-shadow:inset 1px 1px #fff,inset -1px -1px #404040,inset -2px -2px #808080;"></div>
<div style="left:49px;top:92px;width:1px;height:16px;background:#fff;"></div>
<div style="left:50px;top:91px;width:1px;height:1px;background:#fff;"></div>
<div style="left:51px;top:90px;width:47px;height:1px;background:#fff;"></div>
<div style="left:98px;top:91px;width:1px;height:1px;background:#404040;"></div>
<div style="left:99px;top:92px;width:1px;height:16px;background:#404040;"></div>
<div style="left:98px;top:92px;width:1px;height:16px;background:#808080;"></div>
<div class="ms" style="left:53px;top:94px;">Emitente</div>
<div style="left:100px;top:92px;width:1px;height:16px;background:#fff;"></div>
<div style="left:101px;top:91px;width:1px;height:1px;background:#fff;"></div>
<div style="left:102px;top:90px;width:38px;height:1px;background:#fff;"></div>
<div style="left:140px;top:91px;width:1px;height:1px;background:#404040;"></div>
<div style="left:141px;top:92px;width:1px;height:16px;background:#404040;"></div>
<div style="left:140px;top:92px;width:1px;height:16px;background:#808080;"></div>
<div class="ms" style="left:106px;top:94px;">Totais</div>
<div style="left:142px;top:92px;width:1px;height:16px;background:#fff;"></div>
<div style="left:143px;top:91px;width:1px;height:1px;background:#fff;"></div>
<div style="left:144px;top:90px;width:50px;height:1px;background:#fff;"></div>
<div style="left:194px;top:91px;width:1px;height:1px;background:#404040;"></div>
<div style="left:195px;top:92px;width:1px;height:16px;background:#404040;"></div>
<div style="left:194px;top:92px;width:1px;height:16px;background:#808080;"></div>
<div class="ms" style="left:148px;top:94px;">Impostos</div>
<div style="left:196px;top:92px;width:1px;height:16px;background:#fff;"></div>
<div style="left:197px;top:91px;width:1px;height:1px;background:#fff;"></div>
<div style="left:198px;top:90px;width:74px;height:1px;background:#fff;"></div>
<div style="left:272px;top:91px;width:1px;height:1px;background:#404040;"></div>
<div style="left:273px;top:92px;width:1px;height:16px;background:#404040;"></div>
<div style="left:272px;top:92px;width:1px;height:16px;background:#808080;"></div>
<div class="ms" style="left:202px;top:94px;">Transportador</div>
<div style="left:274px;top:92px;width:1px;height:16px;background:#fff;"></div>
<div style="left:275px;top:91px;width:1px;height:1px;background:#fff;"></div>
<div style="left:276px;top:90px;width:41px;height:1px;background:#fff;"></div>
<div style="left:317px;top:91px;width:1px;height:1px;background:#404040;"></div>
<div style="left:318px;top:92px;width:1px;height:16px;background:#404040;"></div>
<div style="left:317px;top:92px;width:1px;height:16px;background:#808080;"></div>
<div class="ms" style="left:280px;top:94px;">Carga</div>
<div style="left:4px;top:88px;width:45px;height:21px;background:#d4d0c8;"></div>
<div style="left:4px;top:90px;width:1px;height:19px;background:#fff;"></div>
<div style="left:5px;top:89px;width:1px;height:1px;background:#fff;"></div>
<div style="left:6px;top:88px;width:41px;height:1px;background:#fff;"></div>
<div style="left:47px;top:89px;width:1px;height:1px;background:#404040;"></div>
<div style="left:48px;top:90px;width:1px;height:19px;background:#404040;"></div>
<div style="left:47px;top:90px;width:1px;height:19px;background:#808080;"></div>
<div class="ms" style="left:11px;top:92px;">Geral</div>
<div class="sbtn" style="left:878px;top:81px;width:16px;height:15px;"></div>
<div class="sbtn" style="left:894px;top:81px;width:15px;height:15px;"></div>
<svg style="position:absolute;left:884px;top:85px" width="4" height="7" viewBox="0 0 4 7" shape-rendering="crispEdges"><rect x="3" y="0" width="1" height="1" fill="#000"/><rect x="2" y="1" width="2" height="1" fill="#000"/><rect x="1" y="2" width="3" height="1" fill="#000"/><rect x="0" y="3" width="4" height="1" fill="#000"/><rect x="1" y="4" width="3" height="1" fill="#000"/><rect x="2" y="5" width="2" height="1" fill="#000"/><rect x="3" y="6" width="1" height="1" fill="#000"/></svg>
<svg style="position:absolute;left:900px;top:85px" width="4" height="7" viewBox="0 0 4 7" shape-rendering="crispEdges"><rect x="0" y="0" width="1" height="1" fill="#000"/><rect x="0" y="1" width="2" height="1" fill="#000"/><rect x="0" y="2" width="3" height="1" fill="#000"/><rect x="0" y="3" width="4" height="1" fill="#000"/><rect x="0" y="4" width="3" height="1" fill="#000"/><rect x="0" y="5" width="2" height="1" fill="#000"/><rect x="0" y="6" width="1" height="1" fill="#000"/></svg>
<div class="sunk" style="left:7px;top:112px;width:899px;height:220px;background:#fff;"></div>
<div class="hc" style="left:9px;top:114px;width:11px;height:34px;"></div>
<div style="left:20px;top:114px;width:1px;height:35px;background:#000;"></div>
<div class="ms" style="left:10px;top:126px;"></div>
<div class="hc" style="left:21px;top:114px;width:49px;height:34px;"></div>
<div style="left:70px;top:114px;width:1px;height:35px;background:#000;"></div>
<div class="ms r" style="left:21px;top:119px;width:48px;text-align:right;">Código</div>
<div class="ms r" style="left:21px;top:133px;width:48px;text-align:right;">Emitente</div>
<div class="hc" style="left:71px;top:114px;width:197px;height:34px;"></div>
<div style="left:268px;top:114px;width:1px;height:35px;background:#000;"></div>
<div class="ms" style="left:72px;top:126px;">Nome do Emitente</div>
<div class="hc" style="left:269px;top:114px;width:131px;height:34px;"></div>
<div style="left:400px;top:114px;width:1px;height:35px;background:#000;"></div>
<div class="ms" style="left:270px;top:126px;">Número</div>
<div class="hc" style="left:401px;top:114px;width:231px;height:34px;"></div>
<div style="left:632px;top:114px;width:1px;height:35px;background:#000;"></div>
<div class="ms r" style="left:401px;top:126px;width:206px;text-align:right;">Natureza da Operação da Nota</div>
<div class="hc" style="left:633px;top:114px;width:52px;height:34px;"></div>
<div style="left:685px;top:114px;width:1px;height:35px;background:#000;"></div>
<div class="ms" style="left:635px;top:119px;">CFOP de</div>
<div class="ms" style="left:635px;top:133px;">Entrada</div>
<div class="hc" style="left:686px;top:114px;width:184px;height:34px;"></div>
<div style="left:870px;top:114px;width:1px;height:35px;background:#000;"></div>
<div class="ms" style="left:687px;top:126px;">Natureza da Operação de Entrada</div>
<div class="hc" style="left:871px;top:114px;width:29px;height:34px;"></div>
<div style="left:900px;top:114px;width:1px;height:35px;background:#000;"></div>
<div class="ms" style="left:872px;top:119px;">Ins</div>
<div class="ms" style="left:872px;top:133px;">Su</div>
<div style="left:9px;top:148px;width:879px;height:1px;background:#000;"></div>
<div class="hc" style="left:9px;top:149px;width:11px;height:17px;"></div>
<div style="left:9px;top:166px;width:11px;height:1px;background:#000;"></div>
<div style="left:21px;top:166px;width:867px;height:1px;background:#c0c0c0;"></div>
<div class="ms r" style="left:21px;top:152px;width:47px;text-align:right;color:#800000;letter-spacing:0.25px;margin-left:0.3px;">3243</div>
<div style="left:73px;top:150px;width:195px;height:16px;overflow:hidden;"><div class="ms" style="left:0;top:2px;letter-spacing:0.05px;">ADENISIO FERNANDO DA SILVA</div></div>
<div class="ms" style="left:271px;top:152px;letter-spacing:0.25px;">0111111</div>
<div class="ms r" style="left:401px;top:152px;width:157.5px;text-align:right;">Compra de mercadoria</div>
<div class="ms" style="left:635px;top:152px;letter-spacing:0.25px;">1.102</div>
<div class="ms" style="left:687px;top:152px;">Compra p/comercializ.</div>
<div class="hc" style="left:9px;top:167px;width:11px;height:17px;"></div>
<div style="left:9px;top:184px;width:11px;height:1px;background:#000;"></div>
<div style="left:21px;top:184px;width:867px;height:1px;background:#c0c0c0;"></div>
<div class="ms r" style="left:21px;top:170px;width:47px;text-align:right;color:#800000;letter-spacing:0.25px;margin-left:0.3px;">100764</div>
<div style="left:73px;top:168px;width:195px;height:16px;overflow:hidden;"><div class="ms" style="left:0;top:2px;letter-spacing:0.05px;">AGIS EQUIP. E SERV INFORMATICA LTDA</div></div>
<div class="ms" style="left:271px;top:170px;letter-spacing:0.25px;">0222222</div>
<div class="ms r" style="left:401px;top:170px;width:157.5px;text-align:right;">Compra p/comercializ.</div>
<div class="ms" style="left:635px;top:170px;letter-spacing:0.25px;">2.102</div>
<div class="ms" style="left:687px;top:170px;">Compra p/comercializ.</div>
<div class="hc" style="left:9px;top:185px;width:11px;height:17px;"></div>
<div style="left:9px;top:202px;width:11px;height:1px;background:#000;"></div>
<div style="left:21px;top:202px;width:867px;height:1px;background:#c0c0c0;"></div>
<div class="ms r" style="left:21px;top:188px;width:47px;text-align:right;color:#800000;letter-spacing:0.25px;margin-left:0.3px;">100165</div>
<div style="left:73px;top:186px;width:195px;height:16px;overflow:hidden;"><div class="ms" style="left:0;top:2px;letter-spacing:0.05px;">AKIRA INFORMATICA LTDA.</div></div>
<div class="ms" style="left:271px;top:188px;letter-spacing:0.25px;">0000333</div>
<div class="ms r" style="left:401px;top:188px;width:157.5px;text-align:right;">Compra de mercadoria</div>
<div class="ms" style="left:635px;top:188px;letter-spacing:0.25px;">1.102</div>
<div class="ms" style="left:687px;top:188px;">Compra p/comercializ.</div>
<div class="hc" style="left:9px;top:203px;width:11px;height:17px;"></div>
<div style="left:9px;top:220px;width:11px;height:1px;background:#000;"></div>
<div style="left:21px;top:220px;width:867px;height:1px;background:#c0c0c0;"></div>
<div class="ms r" style="left:21px;top:206px;width:47px;text-align:right;color:#800000;letter-spacing:0.25px;margin-left:0.3px;">100415</div>
<div style="left:73px;top:204px;width:195px;height:16px;overflow:hidden;"><div class="ms" style="left:0;top:2px;letter-spacing:0.05px;">AIDC TECNOLOGIA LTDA.</div></div>
<div class="ms" style="left:271px;top:206px;letter-spacing:0.25px;">0044444</div>
<div class="ms r" style="left:401px;top:206px;width:157.5px;text-align:right;">Compra de mercadoria</div>
<div class="ms" style="left:635px;top:206px;letter-spacing:0.25px;">1.102</div>
<div class="ms" style="left:687px;top:206px;">Compra p/comercializ.</div>
<div class="hc" style="left:9px;top:221px;width:11px;height:17px;"></div>
<div style="left:9px;top:238px;width:11px;height:1px;background:#000;"></div>
<div style="left:21px;top:238px;width:867px;height:1px;background:#c0c0c0;"></div>
<div class="ms r" style="left:21px;top:224px;width:47px;text-align:right;color:#800000;letter-spacing:0.25px;margin-left:0.3px;">100407</div>
<div style="left:73px;top:222px;width:195px;height:16px;overflow:hidden;"><div class="ms" style="left:0;top:2px;letter-spacing:0.05px;">ALCATECH TELECOMUNICACOES LTDA</div></div>
<div class="ms" style="left:271px;top:224px;letter-spacing:0.25px;">0005555</div>
<div class="ms r" style="left:401px;top:224px;width:157.5px;text-align:right;">Compra de mercadoria</div>
<div class="ms" style="left:635px;top:224px;letter-spacing:0.25px;">2.102</div>
<div class="ms" style="left:687px;top:224px;">Compra p/comercializ.</div>
<div class="hc" style="left:9px;top:239px;width:11px;height:17px;"></div>
<div style="left:9px;top:256px;width:11px;height:1px;background:#000;"></div>
<div style="left:21px;top:256px;width:867px;height:1px;background:#c0c0c0;"></div>
<div class="ms r" style="left:21px;top:242px;width:47px;text-align:right;color:#800000;letter-spacing:0.25px;margin-left:0.3px;">100723</div>
<div style="left:73px;top:240px;width:195px;height:16px;overflow:hidden;"><div class="ms" style="left:0;top:2px;letter-spacing:0.05px;">ALL NATIONS COMERCIO EXTERIOR LTDA</div></div>
<div class="ms" style="left:271px;top:242px;letter-spacing:0.25px;">0000066</div>
<div class="ms r" style="left:401px;top:242px;width:157.5px;text-align:right;">Compra de mercadoria</div>
<div class="ms" style="left:635px;top:242px;letter-spacing:0.25px;">2.102</div>
<div class="ms" style="left:687px;top:242px;">Compra p/comercializ.</div>
<div class="hc" style="left:9px;top:257px;width:11px;height:17px;"></div>
<div style="left:9px;top:274px;width:11px;height:1px;background:#000;"></div>
<div style="left:21px;top:274px;width:867px;height:1px;background:#c0c0c0;"></div>
<div class="ms r" style="left:21px;top:260px;width:47px;text-align:right;color:#800000;letter-spacing:0.25px;margin-left:0.3px;">100404</div>
<div style="left:73px;top:258px;width:195px;height:16px;overflow:hidden;"><div class="ms" style="left:0;top:2px;letter-spacing:0.05px;">ADVANCE EXPRESS ASSIST.TECNICA</div></div>
<div class="ms" style="left:271px;top:260px;letter-spacing:0.25px;">0000007</div>
<div class="ms r" style="left:401px;top:260px;width:157.5px;text-align:right;">Compra de mercadoria</div>
<div class="ms" style="left:635px;top:260px;letter-spacing:0.25px;">1.102</div>
<div class="ms" style="left:687px;top:260px;">Compra p/comercializ.</div>
<div class="hc" style="left:9px;top:275px;width:11px;height:17px;"></div>
<div style="left:9px;top:292px;width:11px;height:1px;background:#000;"></div>
<div style="left:21px;top:292px;width:867px;height:1px;background:#c0c0c0;"></div>
<div class="ms r" style="left:21px;top:278px;width:47px;text-align:right;color:#800000;letter-spacing:0.25px;margin-left:0.3px;">100270</div>
<div style="left:73px;top:276px;width:195px;height:16px;overflow:hidden;"><div class="ms" style="left:0;top:2px;letter-spacing:0.05px;">ACTIVE COMERCIO DE MOVEIS LTDA</div></div>
<div class="ms" style="left:271px;top:278px;letter-spacing:0.25px;">0000000</div>
<div class="ms r" style="left:401px;top:278px;width:157.5px;text-align:right;">Compra de mercadoria</div>
<div class="ms" style="left:635px;top:278px;letter-spacing:0.25px;">1.102</div>
<div class="ms" style="left:687px;top:278px;">Compra p/comercializ.</div>
<div style="left:21px;top:293px;width:867px;height:17px;background:#d1eaf0;"></div>
<div class="hc" style="left:9px;top:293px;width:11px;height:17px;"></div>
<div style="left:9px;top:310px;width:11px;height:1px;background:#000;"></div>
<div style="left:21px;top:310px;width:867px;height:1px;background:#c0c0c0;"></div>
<div class="ms r" style="left:21px;top:296px;width:47px;text-align:right;color:#000;letter-spacing:0.25px;margin-left:0.3px;">100415</div>
<div style="left:73px;top:294px;width:195px;height:16px;overflow:hidden;"><div class="ms" style="left:0;top:2px;letter-spacing:0.05px;">AIDC TECNOLOGIA LTDA.</div></div>
<div style="left:269px;top:293px;width:60px;height:17px;background:#0a246a;outline:1px dotted #f5db95;outline-offset:-1px;"></div>
<div class="ms" style="left:271px;top:296px;color:#fff;letter-spacing:0.25px;">0000000</div>
<div class="ms r" style="left:401px;top:296px;width:157.5px;text-align:right;">Compra de mercadoria</div>
<div class="ms" style="left:635px;top:296px;letter-spacing:0.25px;">1.102</div>
<div class="ms" style="left:687px;top:296px;">Compra p/comercializ.</div>
<div style="left:20px;top:149px;width:1px;height:162px;background:#000;"></div>
<div style="left:70px;top:149px;width:1px;height:162px;background:#c0c0c0;"></div>
<div style="left:268px;top:149px;width:1px;height:162px;background:#c0c0c0;"></div>
<div style="left:400px;top:149px;width:1px;height:162px;background:#c0c0c0;"></div>
<div style="left:632px;top:149px;width:1px;height:162px;background:#c0c0c0;"></div>
<div style="left:685px;top:149px;width:1px;height:162px;background:#c0c0c0;"></div>
<div style="left:870px;top:149px;width:1px;height:162px;background:#c0c0c0;"></div>
<svg style="position:absolute;left:12px;top:296px" width="6" height="11" viewBox="0 0 6 11"><path d="M0 0v11L6 5.5z" fill="#000"/></svg>
<div class="dither" style="left:888px;top:114px;width:16px;height:200px;"></div>
<div class="sbtn" style="left:888px;top:114px;width:16px;height:16px;"></div>
<div class="sbtn" style="left:888px;top:298px;width:16px;height:16px;"></div>
<svg style="position:absolute;left:892px;top:120px" width="7" height="4" viewBox="0 0 7 4"><path d="M0 4h7L3.5 0z" fill="#000"/></svg>
<svg style="position:absolute;left:892px;top:304px" width="7" height="4" viewBox="0 0 7 4"><path d="M0 0h7L3.5 4z" fill="#000"/></svg>
<div class="sbtn" style="left:888px;top:209px;width:16px;height:89px;"></div>
<div class="dither" style="left:9px;top:314px;width:879px;height:16px;"></div>
<div class="sbtn" style="left:9px;top:314px;width:16px;height:16px;"></div>
<div class="sbtn" style="left:25px;top:314px;width:16px;height:16px;"></div>
<div class="sbtn" style="left:872px;top:314px;width:16px;height:16px;"></div>
<svg style="position:absolute;left:14px;top:318px" width="4" height="7" viewBox="0 0 4 7"><path d="M4 0v7L0 3.5z" fill="#000"/></svg>
<svg style="position:absolute;left:878px;top:318px" width="4" height="7" viewBox="0 0 4 7"><path d="M0 0v7L4 3.5z" fill="#000"/></svg>
<div style="left:888px;top:314px;width:16px;height:16px;background:#d4d0c8;"></div>
<div style="left:3px;top:336px;width:1px;height:191px;background:#808080;"></div>
<div style="left:4px;top:336px;width:906px;height:21px;box-shadow:inset 1px 1px #fff,inset -1px -1px #808080;"></div>
<div class="thb" style="left:389px;top:341px;color:#000;letter-spacing:0.1px;">Lançamentos Contábeis</div>
<div style="left:3px;top:358px;width:907px;height:169px;box-shadow:inset 0 1px #808080,inset -1px -1px #fff;"></div>
<div style="left:4px;top:360px;width:450px;height:166px;box-shadow:inset 1px 1px #fff,inset -1px -1px #808080;"></div>
<div class="ms" style="left:9px;top:362px;letter-spacing:-0.15px;">Conta(s) debitada(s):</div>
<div class="sunk" style="left:6px;top:378px;width:446px;height:127px;background:#fff;"></div>
<div class="hc" style="left:9px;top:380px;width:10px;height:17px;"></div>
<div style="left:19px;top:380px;width:1px;height:18px;background:#000;"></div>
<div class="hc" style="left:20px;top:380px;width:57px;height:17px;"></div>
<div style="left:77px;top:380px;width:1px;height:18px;background:#000;"></div>
<div class="ms" style="left:22px;top:383px;">Hierarquia</div>
<div class="hc" style="left:78px;top:380px;width:146px;height:17px;"></div>
<div style="left:224px;top:380px;width:1px;height:18px;background:#000;"></div>
<div class="ms" style="left:80px;top:383px;">Nome da Conta</div>
<div class="hc" style="left:225px;top:380px;width:146px;height:17px;"></div>
<div style="left:371px;top:380px;width:1px;height:18px;background:#000;"></div>
<div class="ms" style="left:227px;top:383px;">Descrição do Lançamento</div>
<div class="hc" style="left:372px;top:380px;width:57px;height:17px;"></div>
<div style="left:429px;top:380px;width:1px;height:18px;background:#000;"></div>
<div class="ms" style="left:374px;top:383px;">Valor</div>
<div style="left:9px;top:397px;width:421px;height:1px;background:#000;"></div>
<div class="hc" style="left:9px;top:398px;width:10px;height:17px;"></div>
<div style="left:9px;top:415px;width:11px;height:1px;background:#000;"></div>
<div style="left:19px;top:398px;width:1px;height:18px;background:#000;"></div>
<div style="left:20px;top:415px;width:410px;height:1px;background:#c0c0c0;"></div>
<div style="left:77px;top:398px;width:1px;height:17px;background:#c0c0c0;"></div>
<div style="left:224px;top:398px;width:1px;height:17px;background:#c0c0c0;"></div>
<div style="left:371px;top:398px;width:1px;height:17px;background:#c0c0c0;"></div>
<div style="left:429px;top:398px;width:1px;height:17px;background:#c0c0c0;"></div>
<svg style="position:absolute;left:11px;top:401px" width="6" height="11" viewBox="0 0 6 11"><path d="M0 0v11L6 5.5z" fill="#000"/></svg>
<div class="ms" style="left:9px;top:510px;">Modo de visualização:</div>
<svg style="position:absolute;left:121px;top:510px" width="12" height="12" viewBox="0 0 12 12"><circle cx="6" cy="6" r="5.5" fill="#fff"/><path d="M1.8 10.2A5.9 5.9 0 0 1 10.2 1.8" fill="none" stroke="#808080" stroke-width="1"/><path d="M2.6 9.4A4.8 4.8 0 0 1 9.4 2.6" fill="none" stroke="#404040" stroke-width="1"/><path d="M1.8 10.2A5.9 5.9 0 0 0 10.2 1.8" fill="none" stroke="#fff" stroke-width="1"/><path d="M2.6 9.4A4.8 4.8 0 0 0 9.4 2.6" fill="none" stroke="#d4d0c8" stroke-width="1"/></svg>
<svg style="position:absolute;left:181px;top:510px" width="12" height="12" viewBox="0 0 12 12"><circle cx="6" cy="6" r="5.5" fill="#fff"/><path d="M1.8 10.2A5.9 5.9 0 0 1 10.2 1.8" fill="none" stroke="#808080" stroke-width="1"/><path d="M2.6 9.4A4.8 4.8 0 0 1 9.4 2.6" fill="none" stroke="#404040" stroke-width="1"/><path d="M1.8 10.2A5.9 5.9 0 0 0 10.2 1.8" fill="none" stroke="#fff" stroke-width="1"/><path d="M2.6 9.4A4.8 4.8 0 0 0 9.4 2.6" fill="none" stroke="#d4d0c8" stroke-width="1"/><circle cx="6" cy="6" r="2" fill="#000"/></svg>
<div class="ms" style="left:138px;top:511px;">Árvore</div>
<div class="ms" style="left:199px;top:511px;">Tabela</div>
<div style="left:457px;top:360px;width:452px;height:166px;box-shadow:inset 1px 1px #fff,inset -1px -1px #808080;"></div>
<div class="ms" style="left:462px;top:362px;letter-spacing:-0.15px;">Conta(s) creditada(s):</div>
<div class="sunk" style="left:459px;top:378px;width:448px;height:127px;background:#fff;"></div>
<div class="hc" style="left:462px;top:380px;width:10px;height:17px;"></div>
<div style="left:472px;top:380px;width:1px;height:18px;background:#000;"></div>
<div class="hc" style="left:473px;top:380px;width:57px;height:17px;"></div>
<div style="left:530px;top:380px;width:1px;height:18px;background:#000;"></div>
<div class="ms" style="left:475px;top:383px;">Hierarquia</div>
<div class="hc" style="left:531px;top:380px;width:147px;height:17px;"></div>
<div style="left:678px;top:380px;width:1px;height:18px;background:#000;"></div>
<div class="ms" style="left:533px;top:383px;">Nome da Conta</div>
<div class="hc" style="left:679px;top:380px;width:147px;height:17px;"></div>
<div style="left:826px;top:380px;width:1px;height:18px;background:#000;"></div>
<div class="ms" style="left:681px;top:383px;">Descrição do Lançamento</div>
<div class="hc" style="left:827px;top:380px;width:57px;height:17px;"></div>
<div style="left:884px;top:380px;width:1px;height:18px;background:#000;"></div>
<div class="ms" style="left:829px;top:383px;">Valor</div>
<div style="left:462px;top:397px;width:423px;height:1px;background:#000;"></div>
<div class="hc" style="left:462px;top:398px;width:10px;height:17px;"></div>
<div style="left:462px;top:415px;width:11px;height:1px;background:#000;"></div>
<div style="left:472px;top:398px;width:1px;height:18px;background:#000;"></div>
<div style="left:473px;top:415px;width:412px;height:1px;background:#c0c0c0;"></div>
<div style="left:530px;top:398px;width:1px;height:17px;background:#c0c0c0;"></div>
<div style="left:678px;top:398px;width:1px;height:17px;background:#c0c0c0;"></div>
<div style="left:826px;top:398px;width:1px;height:17px;background:#c0c0c0;"></div>
<div style="left:884px;top:398px;width:1px;height:17px;background:#c0c0c0;"></div>
<svg style="position:absolute;left:464px;top:401px" width="6" height="11" viewBox="0 0 6 11"><path d="M0 0v11L6 5.5z" fill="#000"/></svg>
<div class="ms" style="left:462px;top:510px;">Modo de visualização:</div>
<svg style="position:absolute;left:574px;top:510px" width="12" height="12" viewBox="0 0 12 12"><circle cx="6" cy="6" r="5.5" fill="#fff"/><path d="M1.8 10.2A5.9 5.9 0 0 1 10.2 1.8" fill="none" stroke="#808080" stroke-width="1"/><path d="M2.6 9.4A4.8 4.8 0 0 1 9.4 2.6" fill="none" stroke="#404040" stroke-width="1"/><path d="M1.8 10.2A5.9 5.9 0 0 0 10.2 1.8" fill="none" stroke="#fff" stroke-width="1"/><path d="M2.6 9.4A4.8 4.8 0 0 0 9.4 2.6" fill="none" stroke="#d4d0c8" stroke-width="1"/></svg>
<svg style="position:absolute;left:634px;top:510px" width="12" height="12" viewBox="0 0 12 12"><circle cx="6" cy="6" r="5.5" fill="#fff"/><path d="M1.8 10.2A5.9 5.9 0 0 1 10.2 1.8" fill="none" stroke="#808080" stroke-width="1"/><path d="M2.6 9.4A4.8 4.8 0 0 1 9.4 2.6" fill="none" stroke="#404040" stroke-width="1"/><path d="M1.8 10.2A5.9 5.9 0 0 0 10.2 1.8" fill="none" stroke="#fff" stroke-width="1"/><path d="M2.6 9.4A4.8 4.8 0 0 0 9.4 2.6" fill="none" stroke="#d4d0c8" stroke-width="1"/><circle cx="6" cy="6" r="2" fill="#000"/></svg>
<div class="ms" style="left:591px;top:511px;">Árvore</div>
<div class="ms" style="left:652px;top:511px;">Tabela</div>
<div style="left:454px;top:360px;width:1px;height:166px;background:#fff;"></div>
<div style="left:455px;top:358px;width:2px;height:169px;background:#808080;"></div>
<div class="btn" style="left:820px;top:534px;width:80px;height:26px;"></div>
<div class="ms" style="left:864px;top:542px;">Sair</div>
<svg style="position:absolute;left:838px;top:539px" width="16" height="17" viewBox="0 0 16 17" shape-rendering="crispEdges"><rect x="5" y="0" width="11" height="1" fill="#000"/><rect x="5" y="1" width="1" height="1" fill="#000"/><rect x="6" y="1" width="5" height="1" fill="#ffff00"/><rect x="11" y="1" width="1" height="1" fill="#000"/><rect x="12" y="1" width="2" height="1" fill="#fff"/><rect x="14" y="1" width="1" height="1" fill="#b0b0a0"/><rect x="15" y="1" width="1" height="1" fill="#000"/><rect x="5" y="2" width="1" height="1" fill="#000"/><rect x="6" y="2" width="3" height="1" fill="#ffff00"/><rect x="9" y="2" width="2" height="1" fill="#000"/><rect x="11" y="2" width="1" height="1" fill="#fff"/><rect x="12" y="2" width="1" height="1" fill="#808000"/><rect x="13" y="2" width="1" height="1" fill="#b0b0a0"/><rect x="14" y="2" width="1" height="1" fill="#808000"/><rect x="15" y="2" width="1" height="1" fill="#000"/><rect x="5" y="3" width="1" height="1" fill="#000"/><rect x="6" y="3" width="2" height="1" fill="#ffff00"/><rect x="8" y="3" width="1" height="1" fill="#000"/><rect x="9" y="3" width="2" height="1" fill="#fff"/><rect x="11" y="3" width="1" height="1" fill="#b0b0a0"/><rect x="12" y="3" width="1" height="1" fill="#808000"/><rect x="13" y="3" width="1" height="1" fill="#b0b0a0"/><rect x="14" y="3" width="1" height="1" fill="#808000"/><rect x="15" y="3" width="1" height="1" fill="#000"/><rect x="5" y="4" width="1" height="1" fill="#000"/><rect x="6" y="4" width="2" height="1" fill="#ffff00"/><rect x="8" y="4" width="1" height="1" fill="#000"/><rect x="9" y="4" width="1" height="1" fill="#fff"/><rect x="10" y="4" width="1" height="1" fill="#808000"/><rect x="11" y="4" width="1" height="1" fill="#b0b0a0"/><rect x="12" y="4" width="1" height="1" fill="#808000"/><rect x="13" y="4" width="1" height="1" fill="#b0b0a0"/><rect x="14" y="4" width="1" height="1" fill="#808000"/><rect x="15" y="4" width="1" height="1" fill="#000"/><rect x="5" y="5" width="1" height="1" fill="#000"/><rect x="6" y="5" width="2" height="1" fill="#ffff00"/><rect x="8" y="5" width="1" height="1" fill="#000"/><rect x="9" y="5" width="1" height="1" fill="#fff"/><rect x="10" y="5" width="1" height="1" fill="#b0b0a0"/><rect x="11" y="5" width="1" height="1" fill="#808000"/><rect x="12" y="5" width="1" height="1" fill="#b0b0a0"/><rect x="13" y="5" width="1" height="1" fill="#808000"/><rect x="14" y="5" width="1" height="1" fill="#b0b0a0"/><rect x="15" y="5" width="1" height="1" fill="#000"/><rect x="5" y="6" width="1" height="1" fill="#000"/><rect x="6" y="6" width="2" height="1" fill="#ffff00"/><rect x="8" y="6" width="1" height="1" fill="#000"/><rect x="9" y="6" width="1" height="1" fill="#fff"/><rect x="10" y="6" width="1" height="1" fill="#808000"/><rect x="11" y="6" width="1" height="1" fill="#b0b0a0"/><rect x="12" y="6" width="1" height="1" fill="#808000"/><rect x="13" y="6" width="1" height="1" fill="#b0b0a0"/><rect x="14" y="6" width="1" height="1" fill="#808000"/><rect x="15" y="6" width="1" height="1" fill="#000"/><rect x="5" y="7" width="1" height="1" fill="#000"/><rect x="6" y="7" width="2" height="1" fill="#ffff00"/><rect x="8" y="7" width="1" height="1" fill="#000"/><rect x="9" y="7" width="1" height="1" fill="#fff"/><rect x="10" y="7" width="1" height="1" fill="#b0b0a0"/><rect x="11" y="7" width="1" height="1" fill="#808000"/><rect x="12" y="7" width="1" height="1" fill="#b0b0a0"/><rect x="13" y="7" width="1" height="1" fill="#808000"/><rect x="14" y="7" width="1" height="1" fill="#b0b0a0"/><rect x="15" y="7" width="1" height="1" fill="#000"/><rect x="5" y="8" width="1" height="1" fill="#000"/><rect x="6" y="8" width="2" height="1" fill="#ffff00"/><rect x="8" y="8" width="1" height="1" fill="#000"/><rect x="9" y="8" width="1" height="1" fill="#fff"/><rect x="10" y="8" width="1" height="1" fill="#808000"/><rect x="11" y="8" width="2" height="1" fill="#fff"/><rect x="13" y="8" width="1" height="1" fill="#b0b0a0"/><rect x="14" y="8" width="1" height="1" fill="#808000"/><rect x="15" y="8" width="1" height="1" fill="#000"/><rect x="5" y="9" width="1" height="1" fill="#000"/><rect x="6" y="9" width="2" height="1" fill="#ffff00"/><rect x="8" y="9" width="1" height="1" fill="#000"/><rect x="9" y="9" width="1" height="1" fill="#fff"/><rect x="10" y="9" width="1" height="1" fill="#b0b0a0"/><rect x="11" y="9" width="2" height="1" fill="#000"/><rect x="13" y="9" width="1" height="1" fill="#808000"/><rect x="14" y="9" width="1" height="1" fill="#b0b0a0"/><rect x="15" y="9" width="1" height="1" fill="#000"/><rect x="5" y="10" width="1" height="1" fill="#000"/><rect x="6" y="10" width="2" height="1" fill="#ffff00"/><rect x="8" y="10" width="1" height="1" fill="#000"/><rect x="9" y="10" width="1" height="1" fill="#fff"/><rect x="10" y="10" width="1" height="1" fill="#808000"/><rect x="11" y="10" width="1" height="1" fill="#b0b0a0"/><rect x="12" y="10" width="1" height="1" fill="#808000"/><rect x="13" y="10" width="1" height="1" fill="#b0b0a0"/><rect x="14" y="10" width="1" height="1" fill="#808000"/><rect x="15" y="10" width="1" height="1" fill="#000"/><rect x="5" y="11" width="1" height="1" fill="#000"/><rect x="6" y="11" width="2" height="1" fill="#ffff00"/><rect x="8" y="11" width="1" height="1" fill="#000"/><rect x="9" y="11" width="1" height="1" fill="#fff"/><rect x="10" y="11" width="1" height="1" fill="#b0b0a0"/><rect x="11" y="11" width="1" height="1" fill="#808000"/><rect x="12" y="11" width="1" height="1" fill="#b0b0a0"/><rect x="13" y="11" width="1" height="1" fill="#808000"/><rect x="14" y="11" width="1" height="1" fill="#b0b0a0"/><rect x="15" y="11" width="1" height="1" fill="#000"/><rect x="0" y="12" width="6" height="1" fill="#000"/><rect x="6" y="12" width="2" height="1" fill="#ffff00"/><rect x="8" y="12" width="1" height="1" fill="#000"/><rect x="9" y="12" width="1" height="1" fill="#fff"/><rect x="10" y="12" width="1" height="1" fill="#808000"/><rect x="11" y="12" width="1" height="1" fill="#b0b0a0"/><rect x="12" y="12" width="1" height="1" fill="#808000"/><rect x="13" y="12" width="1" height="1" fill="#b0b0a0"/><rect x="14" y="12" width="1" height="1" fill="#808000"/><rect x="15" y="12" width="1" height="1" fill="#000"/><rect x="0" y="13" width="1" height="1" fill="#808000"/><rect x="1" y="13" width="1" height="1" fill="#b0b0a0"/><rect x="2" y="13" width="1" height="1" fill="#808000"/><rect x="3" y="13" width="1" height="1" fill="#b0b0a0"/><rect x="4" y="13" width="1" height="1" fill="#808000"/><rect x="5" y="13" width="1" height="1" fill="#b0b0a0"/><rect x="6" y="13" width="1" height="1" fill="#808000"/><rect x="7" y="13" width="2" height="1" fill="#000"/><rect x="9" y="13" width="1" height="1" fill="#fff"/><rect x="10" y="13" width="1" height="1" fill="#b0b0a0"/><rect x="11" y="13" width="1" height="1" fill="#808000"/><rect x="12" y="13" width="1" height="1" fill="#b0b0a0"/><rect x="13" y="13" width="1" height="1" fill="#808000"/><rect x="14" y="13" width="1" height="1" fill="#000"/><rect x="15" y="13" width="1" height="1" fill="#b0b0a0"/><rect x="0" y="14" width="1" height="1" fill="#b0b0a0"/><rect x="1" y="14" width="1" height="1" fill="#808000"/><rect x="2" y="14" width="1" height="1" fill="#b0b0a0"/><rect x="3" y="14" width="1" height="1" fill="#808000"/><rect x="4" y="14" width="1" height="1" fill="#b0b0a0"/><rect x="5" y="14" width="1" height="1" fill="#808000"/><rect x="6" y="14" width="1" height="1" fill="#b0b0a0"/><rect x="7" y="14" width="1" height="1" fill="#000"/><rect x="8" y="14" width="1" height="1" fill="#fff"/><rect x="9" y="14" width="1" height="1" fill="#808000"/><rect x="10" y="14" width="1" height="1" fill="#b0b0a0"/><rect x="11" y="14" width="1" height="1" fill="#808000"/><rect x="12" y="14" width="1" height="1" fill="#000"/><rect x="13" y="14" width="1" height="1" fill="#b0b0a0"/><rect x="14" y="14" width="1" height="1" fill="#808000"/><rect x="15" y="14" width="1" height="1" fill="#b0b0a0"/><rect x="0" y="15" width="1" height="1" fill="#808000"/><rect x="1" y="15" width="1" height="1" fill="#b0b0a0"/><rect x="2" y="15" width="1" height="1" fill="#808000"/><rect x="3" y="15" width="1" height="1" fill="#b0b0a0"/><rect x="4" y="15" width="1" height="1" fill="#808000"/><rect x="5" y="15" width="1" height="1" fill="#b0b0a0"/><rect x="6" y="15" width="1" height="1" fill="#808000"/><rect x="7" y="15" width="1" height="1" fill="#000"/><rect x="8" y="15" width="1" height="1" fill="#fff"/><rect x="9" y="15" width="1" height="1" fill="#b0b0a0"/><rect x="10" y="15" width="2" height="1" fill="#000"/><rect x="12" y="15" width="1" height="1" fill="#808000"/><rect x="13" y="15" width="1" height="1" fill="#b0b0a0"/><rect x="14" y="15" width="1" height="1" fill="#808000"/><rect x="15" y="15" width="1" height="1" fill="#b0b0a0"/><rect x="7" y="16" width="3" height="1" fill="#000"/></svg>
<div style="left:315px;top:51px;width:218px;height:295px;background:rgba(0,0,0,0.30);filter:blur(1px);"></div>
<div style="left:311px;top:47px;width:219px;height:296px;background:#d4d0c8;box-shadow:inset 1px 1px #d4d0c8,inset -1px -1px #404040,inset 2px 2px #fff,inset -2px -2px #808080;"></div>
<div class="th" style="left:335.5px;top:54px;color:#000;">Configurar</div>
<svg style="position:absolute;left:517px;top:56px" width="4" height="7" viewBox="0 0 4 7"><path d="M0 0v7L4 3.5z" fill="#000"/></svg>
<div class="th" style="left:335.5px;top:73px;color:#000;">Coluna</div>
<svg style="position:absolute;left:517px;top:75px" width="4" height="7" viewBox="0 0 4 7"><path d="M0 0v7L4 3.5z" fill="#000"/></svg>
<div style="left:315px;top:92px;width:211px;height:1px;background:#808080;"></div>
<div style="left:315px;top:93px;width:211px;height:1px;background:#fff;"></div>
<div class="th" style="left:335.5px;top:100px;color:#000;">Atualizar</div>
<div class="th" style="left:416px;top:100px;width:100px;text-align:right;color:#000;">F5</div>
<svg style="position:absolute;left:317px;top:97px" width="13" height="16" viewBox="0 0 13 16" shape-rendering="crispEdges"><rect x="0" y="0" width="9" height="1" fill="#808080"/><rect x="0" y="1" width="1" height="1" fill="#808080"/><rect x="1" y="1" width="8" height="1" fill="#fff"/><rect x="9" y="1" width="2" height="1" fill="#000"/><rect x="0" y="2" width="1" height="1" fill="#808080"/><rect x="1" y="2" width="4" height="1" fill="#fff"/><rect x="5" y="2" width="1" height="1" fill="#f4f48c"/><rect x="6" y="2" width="1" height="1" fill="#22a412"/><rect x="7" y="2" width="2" height="1" fill="#fff"/><rect x="9" y="2" width="1" height="1" fill="#000"/><rect x="10" y="2" width="1" height="1" fill="#fff"/><rect x="11" y="2" width="1" height="1" fill="#000"/><rect x="0" y="3" width="1" height="1" fill="#808080"/><rect x="1" y="3" width="2" height="1" fill="#fff"/><rect x="3" y="3" width="1" height="1" fill="#f4f48c"/><rect x="4" y="3" width="1" height="1" fill="#fff"/><rect x="5" y="3" width="1" height="1" fill="#f4f48c"/><rect x="6" y="3" width="2" height="1" fill="#22a412"/><rect x="8" y="3" width="1" height="1" fill="#f4f48c"/><rect x="9" y="3" width="1" height="1" fill="#fff"/><rect x="10" y="3" width="3" height="1" fill="#000"/><rect x="0" y="4" width="1" height="1" fill="#808080"/><rect x="1" y="4" width="1" height="1" fill="#fff"/><rect x="2" y="4" width="1" height="1" fill="#f4f48c"/><rect x="3" y="4" width="1" height="1" fill="#fff"/><rect x="4" y="4" width="1" height="1" fill="#f4f48c"/><rect x="5" y="4" width="4" height="1" fill="#22a412"/><rect x="9" y="4" width="1" height="1" fill="#f4f48c"/><rect x="10" y="4" width="2" height="1" fill="#fff"/><rect x="12" y="4" width="1" height="1" fill="#000"/><rect x="0" y="5" width="1" height="1" fill="#808080"/><rect x="1" y="5" width="1" height="1" fill="#fff"/><rect x="2" y="5" width="1" height="1" fill="#f4f48c"/><rect x="3" y="5" width="7" height="1" fill="#22a412"/><rect x="10" y="5" width="1" height="1" fill="#f4f48c"/><rect x="11" y="5" width="1" height="1" fill="#fff"/><rect x="12" y="5" width="1" height="1" fill="#000"/><rect x="0" y="6" width="1" height="1" fill="#808080"/><rect x="1" y="6" width="1" height="1" fill="#fff"/><rect x="2" y="6" width="1" height="1" fill="#22a412"/><rect x="3" y="6" width="1" height="1" fill="#0a5ca8"/><rect x="4" y="6" width="1" height="1" fill="#22a412"/><rect x="5" y="6" width="1" height="1" fill="#f4f48c"/><rect x="6" y="6" width="3" height="1" fill="#22a412"/><rect x="9" y="6" width="1" height="1" fill="#f4f48c"/><rect x="10" y="6" width="2" height="1" fill="#fff"/><rect x="12" y="6" width="1" height="1" fill="#000"/><rect x="0" y="7" width="1" height="1" fill="#808080"/><rect x="1" y="7" width="1" height="1" fill="#fff"/><rect x="2" y="7" width="1" height="1" fill="#f4f48c"/><rect x="3" y="7" width="1" height="1" fill="#0a5ca8"/><rect x="4" y="7" width="1" height="1" fill="#f4f48c"/><rect x="5" y="7" width="1" height="1" fill="#fff"/><rect x="6" y="7" width="1" height="1" fill="#f4f48c"/><rect x="7" y="7" width="1" height="1" fill="#22a412"/><rect x="8" y="7" width="2" height="1" fill="#f4f48c"/><rect x="10" y="7" width="1" height="1" fill="#fff"/><rect x="11" y="7" width="1" height="1" fill="#f4f48c"/><rect x="12" y="7" width="1" height="1" fill="#000"/><rect x="0" y="8" width="1" height="1" fill="#808080"/><rect x="1" y="8" width="1" height="1" fill="#fff"/><rect x="2" y="8" width="1" height="1" fill="#f4f48c"/><rect x="3" y="8" width="1" height="1" fill="#0a5ca8"/><rect x="4" y="8" width="1" height="1" fill="#f4f48c"/><rect x="5" y="8" width="1" height="1" fill="#fff"/><rect x="6" y="8" width="1" height="1" fill="#f4f48c"/><rect x="7" y="8" width="1" height="1" fill="#fff"/><rect x="8" y="8" width="1" height="1" fill="#f4f48c"/><rect x="9" y="8" width="1" height="1" fill="#0a5ca8"/><rect x="10" y="8" width="1" height="1" fill="#f4f48c"/><rect x="11" y="8" width="1" height="1" fill="#fff"/><rect x="12" y="8" width="1" height="1" fill="#000"/><rect x="0" y="9" width="1" height="1" fill="#808080"/><rect x="1" y="9" width="1" height="1" fill="#fff"/><rect x="2" y="9" width="1" height="1" fill="#f4f48c"/><rect x="3" y="9" width="1" height="1" fill="#fff"/><rect x="4" y="9" width="1" height="1" fill="#f4f48c"/><rect x="5" y="9" width="1" height="1" fill="#fff"/><rect x="6" y="9" width="1" height="1" fill="#f4f48c"/><rect x="7" y="9" width="1" height="1" fill="#fff"/><rect x="8" y="9" width="1" height="1" fill="#f4f48c"/><rect x="9" y="9" width="2" height="1" fill="#0a5ca8"/><rect x="11" y="9" width="1" height="1" fill="#f4f48c"/><rect x="12" y="9" width="1" height="1" fill="#000"/><rect x="0" y="10" width="1" height="1" fill="#808080"/><rect x="1" y="10" width="1" height="1" fill="#fff"/><rect x="2" y="10" width="1" height="1" fill="#f4f48c"/><rect x="3" y="10" width="1" height="1" fill="#fff"/><rect x="4" y="10" width="1" height="1" fill="#f4f48c"/><rect x="5" y="10" width="1" height="1" fill="#22a412"/><rect x="6" y="10" width="1" height="1" fill="#f4f48c"/><rect x="7" y="10" width="1" height="1" fill="#fff"/><rect x="8" y="10" width="1" height="1" fill="#f4f48c"/><rect x="9" y="10" width="1" height="1" fill="#0a5ca8"/><rect x="10" y="10" width="1" height="1" fill="#22a412"/><rect x="11" y="10" width="1" height="1" fill="#fff"/><rect x="12" y="10" width="1" height="1" fill="#000"/><rect x="0" y="11" width="1" height="1" fill="#808080"/><rect x="1" y="11" width="1" height="1" fill="#fff"/><rect x="2" y="11" width="1" height="1" fill="#f4f48c"/><rect x="3" y="11" width="7" height="1" fill="#22a412"/><rect x="10" y="11" width="1" height="1" fill="#f4f48c"/><rect x="11" y="11" width="1" height="1" fill="#fff"/><rect x="12" y="11" width="1" height="1" fill="#000"/><rect x="0" y="12" width="1" height="1" fill="#808080"/><rect x="1" y="12" width="1" height="1" fill="#fff"/><rect x="2" y="12" width="1" height="1" fill="#f4f48c"/><rect x="3" y="12" width="1" height="1" fill="#fff"/><rect x="4" y="12" width="4" height="1" fill="#22a412"/><rect x="8" y="12" width="1" height="1" fill="#f4f48c"/><rect x="9" y="12" width="1" height="1" fill="#fff"/><rect x="10" y="12" width="1" height="1" fill="#f4f48c"/><rect x="11" y="12" width="1" height="1" fill="#fff"/><rect x="12" y="12" width="1" height="1" fill="#000"/><rect x="0" y="13" width="1" height="1" fill="#808080"/><rect x="1" y="13" width="1" height="1" fill="#fff"/><rect x="2" y="13" width="1" height="1" fill="#f4f48c"/><rect x="3" y="13" width="1" height="1" fill="#fff"/><rect x="4" y="13" width="1" height="1" fill="#f4f48c"/><rect x="5" y="13" width="2" height="1" fill="#22a412"/><rect x="7" y="13" width="1" height="1" fill="#f4f48c"/><rect x="8" y="13" width="1" height="1" fill="#fff"/><rect x="9" y="13" width="1" height="1" fill="#f4f48c"/><rect x="10" y="13" width="2" height="1" fill="#fff"/><rect x="12" y="13" width="1" height="1" fill="#000"/><rect x="0" y="14" width="1" height="1" fill="#808080"/><rect x="1" y="14" width="4" height="1" fill="#fff"/><rect x="5" y="14" width="1" height="1" fill="#f4f48c"/><rect x="6" y="14" width="6" height="1" fill="#fff"/><rect x="12" y="14" width="1" height="1" fill="#000"/><rect x="0" y="15" width="13" height="1" fill="#000"/></svg>
<div class="th" style="left:335.5px;top:119px;color:#000;">Processar nota</div>
<div class="th" style="left:416px;top:119px;width:100px;text-align:right;color:#000;">F10</div>
<svg style="position:absolute;left:315px;top:116px" width="16" height="16" viewBox="0 0 16 16"><path d="M9.10 2.50L9.03 3.31L10.66 3.80L9.78 5.94L8.27 5.13L7.75 5.75L7.13 6.27L7.94 7.78L5.80 8.66L5.31 7.03L4.50 7.10L3.69 7.03L3.20 8.66L1.06 7.78L1.87 6.27L1.25 5.75L0.73 5.13L-0.78 5.94L-1.66 3.80L-0.03 3.31L-0.10 2.50L-0.03 1.69L-1.66 1.20L-0.78 -0.94L0.73 -0.13L1.25 -0.75L1.87 -1.27L1.06 -2.78L3.20 -3.66L3.69 -2.03L4.50 -2.10L5.31 -2.03L5.80 -3.66L7.94 -2.78L7.13 -1.27L7.75 -0.75L8.27 -0.13L9.78 -0.94L10.66 1.20L9.03 1.69z" fill="#000"/><circle cx="4.5" cy="2.5" r="3.6" fill="none" stroke="#909090" stroke-width="1"/><circle cx="4.5" cy="2.5" r="1.8" fill="#d4d0c8"/><circle cx="4.5" cy="2.5" r="0.8" fill="#000"/><path d="M24.15 10.18L24.02 10.87L25.82 11.50L25.08 13.29L23.36 12.46L22.96 13.05L22.50 13.58L23.75 15.02L22.21 16.21L21.14 14.63L20.50 14.94L19.83 15.17L20.19 17.04L18.27 17.30L18.13 15.40L17.42 15.35L16.73 15.22L16.10 17.02L14.31 16.28L15.14 14.56L14.55 14.16L14.02 13.70L12.58 14.95L11.39 13.41L12.97 12.34L12.66 11.70L12.43 11.03L10.56 11.39L10.30 9.47L12.20 9.33L12.25 8.62L12.38 7.93L10.58 7.30L11.32 5.51L13.04 6.34L13.44 5.75L13.90 5.22L12.65 3.78L14.19 2.59L15.26 4.17L15.90 3.86L16.57 3.63L16.21 1.76L18.13 1.50L18.27 3.40L18.98 3.45L19.67 3.58L20.30 1.78L22.09 2.52L21.26 4.24L21.85 4.64L22.38 5.10L23.82 3.85L25.01 5.39L23.43 6.46L23.74 7.10L23.97 7.77L25.84 7.41L26.10 9.33L24.20 9.47z" fill="#000"/><circle cx="18.2" cy="9.4" r="4.8" fill="none" stroke="#909090" stroke-width="1"/><circle cx="18.2" cy="9.4" r="2.8" fill="#d4d0c8"/><path d="M4.59 17.51L4.51 18.24L6.45 18.74L5.84 20.65L3.97 19.93L3.61 20.56L3.18 21.15L4.61 22.56L3.11 23.91L1.86 22.35L1.23 22.72L0.56 23.01L1.09 24.94L-0.87 25.37L-1.18 23.39L-1.91 23.39L-2.64 23.31L-3.14 25.25L-5.05 24.64L-4.33 22.77L-4.96 22.41L-5.55 21.98L-6.96 23.41L-8.31 21.91L-6.75 20.66L-7.12 20.03L-7.41 19.36L-9.34 19.89L-9.77 17.93L-7.79 17.62L-7.79 16.89L-7.71 16.16L-9.65 15.66L-9.04 13.75L-7.17 14.47L-6.81 13.84L-6.38 13.25L-7.81 11.84L-6.31 10.49L-5.06 12.05L-4.43 11.68L-3.76 11.39L-4.29 9.46L-2.33 9.03L-2.02 11.01L-1.29 11.01L-0.56 11.09L-0.06 9.15L1.85 9.76L1.13 11.63L1.76 11.99L2.35 12.42L3.76 10.99L5.11 12.49L3.55 13.74L3.92 14.37L4.21 15.04L6.14 14.51L6.57 16.47L4.59 16.78z" fill="#000"/><circle cx="-1.6" cy="17.2" r="5.0" fill="none" stroke="#909090" stroke-width="1"/><circle cx="-1.6" cy="17.2" r="3.0" fill="#d4d0c8"/></svg>
<div class="th" style="left:335.5px;top:138px;color:#000;">Precificação de Produtos</div>
<svg style="position:absolute;left:315px;top:136px" width="16" height="14" viewBox="0 0 16 14" shape-rendering="crispEdges"><rect x="0" y="0" width="16" height="1" fill="#808080"/><rect x="0" y="1" width="1" height="1" fill="#808080"/><rect x="1" y="1" width="2" height="1" fill="#fff"/><rect x="3" y="1" width="1" height="1" fill="#808080"/><rect x="4" y="1" width="2" height="1" fill="#fff"/><rect x="6" y="1" width="1" height="1" fill="#808080"/><rect x="7" y="1" width="2" height="1" fill="#fff"/><rect x="9" y="1" width="1" height="1" fill="#808080"/><rect x="10" y="1" width="2" height="1" fill="#fff"/><rect x="12" y="1" width="1" height="1" fill="#808080"/><rect x="13" y="1" width="2" height="1" fill="#fff"/><rect x="15" y="1" width="1" height="1" fill="#808080"/><rect x="0" y="2" width="1" height="1" fill="#808080"/><rect x="1" y="2" width="2" height="1" fill="#fff"/><rect x="3" y="2" width="1" height="1" fill="#808080"/><rect x="4" y="2" width="2" height="1" fill="#fff"/><rect x="6" y="2" width="1" height="1" fill="#808080"/><rect x="7" y="2" width="2" height="1" fill="#fff"/><rect x="9" y="2" width="1" height="1" fill="#808080"/><rect x="10" y="2" width="2" height="1" fill="#fff"/><rect x="12" y="2" width="1" height="1" fill="#808080"/><rect x="13" y="2" width="2" height="1" fill="#fff"/><rect x="15" y="2" width="1" height="1" fill="#808080"/><rect x="0" y="3" width="16" height="1" fill="#808080"/><rect x="0" y="4" width="1" height="1" fill="#808080"/><rect x="1" y="4" width="2" height="1" fill="#fff"/><rect x="3" y="4" width="1" height="1" fill="#808080"/><rect x="4" y="4" width="2" height="1" fill="#fff"/><rect x="6" y="4" width="1" height="1" fill="#808080"/><rect x="7" y="4" width="2" height="1" fill="#fff"/><rect x="9" y="4" width="1" height="1" fill="#808080"/><rect x="10" y="4" width="2" height="1" fill="#fff"/><rect x="12" y="4" width="1" height="1" fill="#808080"/><rect x="13" y="4" width="2" height="1" fill="#fff"/><rect x="15" y="4" width="1" height="1" fill="#808080"/><rect x="0" y="5" width="1" height="1" fill="#808080"/><rect x="1" y="5" width="2" height="1" fill="#fff"/><rect x="3" y="5" width="1" height="1" fill="#808080"/><rect x="4" y="5" width="2" height="1" fill="#fff"/><rect x="6" y="5" width="1" height="1" fill="#808080"/><rect x="7" y="5" width="2" height="1" fill="#fff"/><rect x="9" y="5" width="1" height="1" fill="#808080"/><rect x="10" y="5" width="2" height="1" fill="#fff"/><rect x="12" y="5" width="1" height="1" fill="#808080"/><rect x="13" y="5" width="2" height="1" fill="#fff"/><rect x="15" y="5" width="1" height="1" fill="#808080"/><rect x="0" y="6" width="16" height="1" fill="#808080"/><rect x="0" y="7" width="1" height="1" fill="#808080"/><rect x="1" y="7" width="2" height="1" fill="#fff"/><rect x="3" y="7" width="1" height="1" fill="#808080"/><rect x="4" y="7" width="2" height="1" fill="#fff"/><rect x="6" y="7" width="1" height="1" fill="#808080"/><rect x="7" y="7" width="2" height="1" fill="#fff"/><rect x="9" y="7" width="1" height="1" fill="#808080"/><rect x="10" y="7" width="2" height="1" fill="#fff"/><rect x="12" y="7" width="1" height="1" fill="#808080"/><rect x="13" y="7" width="2" height="1" fill="#fff"/><rect x="15" y="7" width="1" height="1" fill="#808080"/><rect x="0" y="8" width="1" height="1" fill="#808080"/><rect x="1" y="8" width="2" height="1" fill="#fff"/><rect x="3" y="8" width="1" height="1" fill="#808080"/><rect x="4" y="8" width="2" height="1" fill="#fff"/><rect x="6" y="8" width="1" height="1" fill="#808080"/><rect x="7" y="8" width="2" height="1" fill="#fff"/><rect x="9" y="8" width="1" height="1" fill="#808080"/><rect x="10" y="8" width="2" height="1" fill="#fff"/><rect x="12" y="8" width="1" height="1" fill="#808080"/><rect x="13" y="8" width="2" height="1" fill="#fff"/><rect x="15" y="8" width="1" height="1" fill="#808080"/><rect x="0" y="9" width="16" height="1" fill="#808080"/><rect x="0" y="10" width="1" height="1" fill="#808080"/><rect x="1" y="10" width="2" height="1" fill="#fff"/><rect x="3" y="10" width="1" height="1" fill="#808080"/><rect x="4" y="10" width="2" height="1" fill="#fff"/><rect x="6" y="10" width="1" height="1" fill="#808080"/><rect x="7" y="10" width="2" height="1" fill="#fff"/><rect x="9" y="10" width="1" height="1" fill="#808080"/><rect x="10" y="10" width="2" height="1" fill="#fff"/><rect x="12" y="10" width="1" height="1" fill="#808080"/><rect x="13" y="10" width="2" height="1" fill="#fff"/><rect x="15" y="10" width="1" height="1" fill="#808080"/><rect x="0" y="11" width="1" height="1" fill="#808080"/><rect x="1" y="11" width="2" height="1" fill="#fff"/><rect x="3" y="11" width="1" height="1" fill="#808080"/><rect x="4" y="11" width="2" height="1" fill="#fff"/><rect x="6" y="11" width="1" height="1" fill="#808080"/><rect x="7" y="11" width="2" height="1" fill="#fff"/><rect x="9" y="11" width="1" height="1" fill="#808080"/><rect x="10" y="11" width="2" height="1" fill="#fff"/><rect x="12" y="11" width="1" height="1" fill="#808080"/><rect x="13" y="11" width="2" height="1" fill="#fff"/><rect x="15" y="11" width="1" height="1" fill="#808080"/><rect x="0" y="12" width="1" height="1" fill="#808080"/><rect x="1" y="12" width="2" height="1" fill="#fff"/><rect x="3" y="12" width="1" height="1" fill="#808080"/><rect x="4" y="12" width="2" height="1" fill="#fff"/><rect x="6" y="12" width="1" height="1" fill="#808080"/><rect x="7" y="12" width="2" height="1" fill="#fff"/><rect x="9" y="12" width="1" height="1" fill="#808080"/><rect x="10" y="12" width="2" height="1" fill="#fff"/><rect x="12" y="12" width="1" height="1" fill="#808080"/><rect x="13" y="12" width="2" height="1" fill="#fff"/><rect x="15" y="12" width="1" height="1" fill="#808080"/><rect x="0" y="13" width="16" height="1" fill="#808080"/></svg><svg style="position:absolute;left:319px;top:135px;overflow:visible" width="10" height="16" viewBox="0 0 10 16"><text x="0" y="12.8" font-family="DejaVu Sans,sans-serif" font-weight="bold" font-size="15.5" fill="#008000" textLength="7.4" lengthAdjust="spacingAndGlyphs">$</text></svg><svg style="position:absolute;left:316px;top:137px" width="3" height="9" viewBox="0 0 3 9" shape-rendering="crispEdges"><rect x="1" y="0" width="1" height="1" fill="#000080"/><rect x="1" y="1" width="1" height="1" fill="#0000ff"/><rect x="1" y="2" width="1" height="1" fill="#0000ff"/><rect x="1" y="3" width="1" height="1" fill="#0000ff"/><rect x="1" y="4" width="1" height="1" fill="#0000ff"/><rect x="0" y="5" width="1" height="1" fill="#000080"/><rect x="1" y="5" width="1" height="1" fill="#0000ff"/><rect x="2" y="5" width="1" height="1" fill="#000080"/><rect x="0" y="6" width="1" height="1" fill="#000080"/><rect x="1" y="6" width="1" height="1" fill="#0000ff"/><rect x="2" y="6" width="1" height="1" fill="#000080"/><rect x="1" y="7" width="1" height="1" fill="#0000ff"/><rect x="1" y="8" width="1" height="1" fill="#000080"/></svg><svg style="position:absolute;left:326px;top:140px" width="4" height="8" viewBox="0 0 4 8" shape-rendering="crispEdges"><rect x="1" y="0" width="1" height="1" fill="#000080"/><rect x="0" y="1" width="1" height="1" fill="#000080"/><rect x="1" y="1" width="1" height="1" fill="#0000ff"/><rect x="2" y="1" width="1" height="1" fill="#000080"/><rect x="0" y="2" width="1" height="1" fill="#000080"/><rect x="1" y="2" width="1" height="1" fill="#0000ff"/><rect x="2" y="2" width="2" height="1" fill="#000080"/><rect x="1" y="3" width="1" height="1" fill="#0000ff"/><rect x="2" y="3" width="1" height="1" fill="#000080"/><rect x="1" y="4" width="1" height="1" fill="#0000ff"/><rect x="2" y="4" width="1" height="1" fill="#000080"/><rect x="1" y="5" width="1" height="1" fill="#0000ff"/><rect x="2" y="5" width="1" height="1" fill="#000080"/><rect x="1" y="6" width="1" height="1" fill="#0000ff"/><rect x="2" y="6" width="1" height="1" fill="#000080"/><rect x="1" y="7" width="2" height="1" fill="#000080"/></svg>
<div class="th" style="left:335.5px;top:157px;color:#000;">Remarcar preços</div>
<div class="th" style="left:416px;top:157px;width:100px;text-align:right;color:#000;">Ctrl+Alt+R</div>
<svg style="position:absolute;left:315px;top:155px" width="16" height="14" viewBox="0 0 16 14" shape-rendering="crispEdges"><rect x="0" y="0" width="16" height="1" fill="#808080"/><rect x="0" y="1" width="1" height="1" fill="#808080"/><rect x="1" y="1" width="2" height="1" fill="#fff"/><rect x="3" y="1" width="1" height="1" fill="#808080"/><rect x="4" y="1" width="2" height="1" fill="#fff"/><rect x="6" y="1" width="1" height="1" fill="#808080"/><rect x="7" y="1" width="2" height="1" fill="#fff"/><rect x="9" y="1" width="1" height="1" fill="#808080"/><rect x="10" y="1" width="2" height="1" fill="#fff"/><rect x="12" y="1" width="1" height="1" fill="#808080"/><rect x="13" y="1" width="2" height="1" fill="#fff"/><rect x="15" y="1" width="1" height="1" fill="#808080"/><rect x="0" y="2" width="1" height="1" fill="#808080"/><rect x="1" y="2" width="2" height="1" fill="#fff"/><rect x="3" y="2" width="1" height="1" fill="#808080"/><rect x="4" y="2" width="2" height="1" fill="#fff"/><rect x="6" y="2" width="1" height="1" fill="#808080"/><rect x="7" y="2" width="2" height="1" fill="#fff"/><rect x="9" y="2" width="1" height="1" fill="#808080"/><rect x="10" y="2" width="2" height="1" fill="#fff"/><rect x="12" y="2" width="1" height="1" fill="#808080"/><rect x="13" y="2" width="2" height="1" fill="#fff"/><rect x="15" y="2" width="1" height="1" fill="#808080"/><rect x="0" y="3" width="16" height="1" fill="#808080"/><rect x="0" y="4" width="1" height="1" fill="#808080"/><rect x="1" y="4" width="2" height="1" fill="#fff"/><rect x="3" y="4" width="1" height="1" fill="#808080"/><rect x="4" y="4" width="2" height="1" fill="#fff"/><rect x="6" y="4" width="1" height="1" fill="#808080"/><rect x="7" y="4" width="2" height="1" fill="#fff"/><rect x="9" y="4" width="1" height="1" fill="#808080"/><rect x="10" y="4" width="2" height="1" fill="#fff"/><rect x="12" y="4" width="1" height="1" fill="#808080"/><rect x="13" y="4" width="2" height="1" fill="#fff"/><rect x="15" y="4" width="1" height="1" fill="#808080"/><rect x="0" y="5" width="1" height="1" fill="#808080"/><rect x="1" y="5" width="2" height="1" fill="#fff"/><rect x="3" y="5" width="1" height="1" fill="#808080"/><rect x="4" y="5" width="2" height="1" fill="#fff"/><rect x="6" y="5" width="1" height="1" fill="#808080"/><rect x="7" y="5" width="2" height="1" fill="#fff"/><rect x="9" y="5" width="1" height="1" fill="#808080"/><rect x="10" y="5" width="2" height="1" fill="#fff"/><rect x="12" y="5" width="1" height="1" fill="#808080"/><rect x="13" y="5" width="2" height="1" fill="#fff"/><rect x="15" y="5" width="1" height="1" fill="#808080"/><rect x="0" y="6" width="16" height="1" fill="#808080"/><rect x="0" y="7" width="1" height="1" fill="#808080"/><rect x="1" y="7" width="2" height="1" fill="#fff"/><rect x="3" y="7" width="1" height="1" fill="#808080"/><rect x="4" y="7" width="2" height="1" fill="#fff"/><rect x="6" y="7" width="1" height="1" fill="#808080"/><rect x="7" y="7" width="2" height="1" fill="#fff"/><rect x="9" y="7" width="1" height="1" fill="#808080"/><rect x="10" y="7" width="2" height="1" fill="#fff"/><rect x="12" y="7" width="1" height="1" fill="#808080"/><rect x="13" y="7" width="2" height="1" fill="#fff"/><rect x="15" y="7" width="1" height="1" fill="#808080"/><rect x="0" y="8" width="1" height="1" fill="#808080"/><rect x="1" y="8" width="2" height="1" fill="#fff"/><rect x="3" y="8" width="1" height="1" fill="#808080"/><rect x="4" y="8" width="2" height="1" fill="#fff"/><rect x="6" y="8" width="1" height="1" fill="#808080"/><rect x="7" y="8" width="2" height="1" fill="#fff"/><rect x="9" y="8" width="1" height="1" fill="#808080"/><rect x="10" y="8" width="2" height="1" fill="#fff"/><rect x="12" y="8" width="1" height="1" fill="#808080"/><rect x="13" y="8" width="2" height="1" fill="#fff"/><rect x="15" y="8" width="1" height="1" fill="#808080"/><rect x="0" y="9" width="16" height="1" fill="#808080"/><rect x="0" y="10" width="1" height="1" fill="#808080"/><rect x="1" y="10" width="2" height="1" fill="#fff"/><rect x="3" y="10" width="1" height="1" fill="#808080"/><rect x="4" y="10" width="2" height="1" fill="#fff"/><rect x="6" y="10" width="1" height="1" fill="#808080"/><rect x="7" y="10" width="2" height="1" fill="#fff"/><rect x="9" y="10" width="1" height="1" fill="#808080"/><rect x="10" y="10" width="2" height="1" fill="#fff"/><rect x="12" y="10" width="1" height="1" fill="#808080"/><rect x="13" y="10" width="2" height="1" fill="#fff"/><rect x="15" y="10" width="1" height="1" fill="#808080"/><rect x="0" y="11" width="1" height="1" fill="#808080"/><rect x="1" y="11" width="2" height="1" fill="#fff"/><rect x="3" y="11" width="1" height="1" fill="#808080"/><rect x="4" y="11" width="2" height="1" fill="#fff"/><rect x="6" y="11" width="1" height="1" fill="#808080"/><rect x="7" y="11" width="2" height="1" fill="#fff"/><rect x="9" y="11" width="1" height="1" fill="#808080"/><rect x="10" y="11" width="2" height="1" fill="#fff"/><rect x="12" y="11" width="1" height="1" fill="#808080"/><rect x="13" y="11" width="2" height="1" fill="#fff"/><rect x="15" y="11" width="1" height="1" fill="#808080"/><rect x="0" y="12" width="1" height="1" fill="#808080"/><rect x="1" y="12" width="2" height="1" fill="#fff"/><rect x="3" y="12" width="1" height="1" fill="#808080"/><rect x="4" y="12" width="2" height="1" fill="#fff"/><rect x="6" y="12" width="1" height="1" fill="#808080"/><rect x="7" y="12" width="2" height="1" fill="#fff"/><rect x="9" y="12" width="1" height="1" fill="#808080"/><rect x="10" y="12" width="2" height="1" fill="#fff"/><rect x="12" y="12" width="1" height="1" fill="#808080"/><rect x="13" y="12" width="2" height="1" fill="#fff"/><rect x="15" y="12" width="1" height="1" fill="#808080"/><rect x="0" y="13" width="16" height="1" fill="#808080"/></svg><svg style="position:absolute;left:322px;top:153px;overflow:visible" width="10" height="16" viewBox="0 0 10 16"><text x="0" y="12.8" font-family="DejaVu Sans,sans-serif" font-weight="bold" font-size="15.5" fill="#008000" textLength="7.4" lengthAdjust="spacingAndGlyphs">$</text></svg><svg style="position:absolute;left:316px;top:156px" width="6" height="5" viewBox="0 0 6 5" shape-rendering="crispEdges"><rect x="4" y="0" width="2" height="1" fill="#ff0000"/><rect x="3" y="1" width="2" height="1" fill="#ff0000"/><rect x="0" y="2" width="2" height="1" fill="#ff0000"/><rect x="3" y="2" width="2" height="1" fill="#ff0000"/><rect x="1" y="3" width="3" height="1" fill="#ff0000"/><rect x="2" y="4" width="1" height="1" fill="#ff0000"/></svg><svg style="position:absolute;left:316px;top:161px" width="6" height="5" viewBox="0 0 6 5" shape-rendering="crispEdges"><rect x="4" y="0" width="2" height="1" fill="#ff0000"/><rect x="3" y="1" width="2" height="1" fill="#ff0000"/><rect x="0" y="2" width="2" height="1" fill="#ff0000"/><rect x="3" y="2" width="2" height="1" fill="#ff0000"/><rect x="1" y="3" width="3" height="1" fill="#ff0000"/><rect x="2" y="4" width="1" height="1" fill="#ff0000"/></svg>
<div class="th" style="left:335.5px;top:176px;color:#808080;text-shadow:1px 1px 0 #fff;">Editar parcelas da nota</div>
<div class="th" style="left:416px;top:176px;width:100px;text-align:right;color:#808080;text-shadow:1px 1px 0 #fff;">Ctrl+Alt+E</div>
<div style="left:315px;top:195px;width:211px;height:1px;background:#808080;"></div>
<div style="left:315px;top:196px;width:211px;height:1px;background:#fff;"></div>
<div class="th" style="left:335.5px;top:203px;color:#000;">Efetivar nota</div>
<div class="th" style="left:416px;top:203px;width:100px;text-align:right;color:#000;">Alt+F11</div>
<svg style="position:absolute;left:315px;top:202px" width="16" height="13" viewBox="0 0 16 13" shape-rendering="crispEdges"><rect x="0" y="0" width="16" height="1" fill="#808080"/><rect x="0" y="1" width="16" height="1" fill="#fff"/><rect x="0" y="2" width="16" height="1" fill="#fff"/><rect x="0" y="3" width="16" height="1" fill="#fff"/><rect x="0" y="4" width="16" height="1" fill="#fff"/><rect x="0" y="5" width="16" height="1" fill="#fff"/><rect x="0" y="6" width="16" height="1" fill="#fff"/><rect x="0" y="7" width="16" height="1" fill="#fff"/><rect x="0" y="8" width="16" height="1" fill="#fff"/><rect x="0" y="9" width="16" height="1" fill="#fff"/><rect x="0" y="10" width="16" height="1" fill="#fff"/><rect x="0" y="11" width="16" height="1" fill="#fff"/><rect x="0" y="12" width="16" height="1" fill="#808080"/></svg><svg style="position:absolute;left:316px;top:201px;overflow:visible" width="10" height="16" viewBox="0 0 10 16"><text x="0" y="12.8" font-family="DejaVu Sans,sans-serif" font-weight="bold" font-size="15.5" fill="#008000" textLength="7.4" lengthAdjust="spacingAndGlyphs">$</text></svg><svg style="position:absolute;left:315px;top:200px" width="16" height="16" viewBox="0 0 16 16"><path d="M6.8 8.6L9.4 11.4 15.8 3.2" fill="none" stroke="#000080" stroke-width="1.5"/><path d="M6.8 7.4L9.4 10.2 15.8 2.0" fill="none" stroke="#00d800" stroke-width="1.6"/></svg>
<div class="th" style="left:335.5px;top:222px;color:#000;">Efetivar com Forma Pag.</div>
<div class="th" style="left:416px;top:222px;width:100px;text-align:right;color:#000;">F11</div>
<svg style="position:absolute;left:315px;top:221px" width="16" height="13" viewBox="0 0 16 13" shape-rendering="crispEdges"><rect x="0" y="0" width="16" height="1" fill="#808080"/><rect x="0" y="1" width="16" height="1" fill="#fff"/><rect x="0" y="2" width="16" height="1" fill="#fff"/><rect x="0" y="3" width="16" height="1" fill="#fff"/><rect x="0" y="4" width="16" height="1" fill="#fff"/><rect x="0" y="5" width="16" height="1" fill="#fff"/><rect x="0" y="6" width="16" height="1" fill="#fff"/><rect x="0" y="7" width="16" height="1" fill="#fff"/><rect x="0" y="8" width="16" height="1" fill="#fff"/><rect x="0" y="9" width="16" height="1" fill="#fff"/><rect x="0" y="10" width="16" height="1" fill="#fff"/><rect x="0" y="11" width="16" height="1" fill="#fff"/><rect x="0" y="12" width="16" height="1" fill="#808080"/></svg><svg style="position:absolute;left:316px;top:220px;overflow:visible" width="10" height="16" viewBox="0 0 10 16"><text x="0" y="12.8" font-family="DejaVu Sans,sans-serif" font-weight="bold" font-size="15.5" fill="#008000" textLength="7.4" lengthAdjust="spacingAndGlyphs">$</text></svg><svg style="position:absolute;left:315px;top:219px" width="16" height="16" viewBox="0 0 16 16"><path d="M6.8 8.6L9.4 11.4 15.8 3.2" fill="none" stroke="#000080" stroke-width="1.5"/><path d="M6.8 7.4L9.4 10.2 15.8 2.0" fill="none" stroke="#00d800" stroke-width="1.6"/></svg>
<div class="th" style="left:335.5px;top:241px;color:#000;">Efetivar como Expert</div>
<div class="th" style="left:416px;top:241px;width:100px;text-align:right;color:#000;">Shift+F11</div>
<svg style="position:absolute;left:315px;top:240px" width="16" height="13" viewBox="0 0 16 13" shape-rendering="crispEdges"><rect x="0" y="0" width="16" height="1" fill="#808080"/><rect x="0" y="1" width="16" height="1" fill="#fff"/><rect x="0" y="2" width="16" height="1" fill="#fff"/><rect x="0" y="3" width="16" height="1" fill="#fff"/><rect x="0" y="4" width="16" height="1" fill="#fff"/><rect x="0" y="5" width="16" height="1" fill="#fff"/><rect x="0" y="6" width="16" height="1" fill="#fff"/><rect x="0" y="7" width="16" height="1" fill="#fff"/><rect x="0" y="8" width="16" height="1" fill="#fff"/><rect x="0" y="9" width="16" height="1" fill="#fff"/><rect x="0" y="10" width="16" height="1" fill="#fff"/><rect x="0" y="11" width="16" height="1" fill="#fff"/><rect x="0" y="12" width="16" height="1" fill="#808080"/></svg><svg style="position:absolute;left:316px;top:239px;overflow:visible" width="10" height="16" viewBox="0 0 10 16"><text x="0" y="12.8" font-family="DejaVu Sans,sans-serif" font-weight="bold" font-size="15.5" fill="#008000" textLength="7.4" lengthAdjust="spacingAndGlyphs">$</text></svg><svg style="position:absolute;left:315px;top:238px" width="16" height="16" viewBox="0 0 16 16"><path d="M6.8 8.6L9.4 11.4 15.8 3.2" fill="none" stroke="#000080" stroke-width="1.5"/><path d="M6.8 7.4L9.4 10.2 15.8 2.0" fill="none" stroke="#00d800" stroke-width="1.6"/></svg>
<div class="th" style="left:335px;top:260px;color:#000;">Lançamentos Contábeis</div>
<svg style="position:absolute;left:319px;top:263px" width="7" height="7" viewBox="0 0 7 7" shape-rendering="crispEdges"><rect x="6" y="0" width="1" height="1" fill="#000"/><rect x="5" y="1" width="2" height="1" fill="#000"/><rect x="0" y="2" width="1" height="1" fill="#000"/><rect x="4" y="2" width="3" height="1" fill="#000"/><rect x="0" y="3" width="2" height="1" fill="#000"/><rect x="3" y="3" width="3" height="1" fill="#000"/><rect x="0" y="4" width="5" height="1" fill="#000"/><rect x="1" y="5" width="3" height="1" fill="#000"/><rect x="2" y="6" width="1" height="1" fill="#000"/></svg>
<div style="left:315px;top:279px;width:211px;height:1px;background:#808080;"></div>
<div style="left:315px;top:280px;width:211px;height:1px;background:#fff;"></div>
<div class="th" style="left:335.5px;top:287px;color:#000;">Gerar nota fiscal de Pedido</div>
<svg style="position:absolute;left:517px;top:289px" width="4" height="7" viewBox="0 0 4 7"><path d="M0 0v7L4 3.5z" fill="#000"/></svg>
<div style="left:314px;top:302px;width:213px;height:19px;background:#0a246a;"></div>
<div class="th" style="left:335.5px;top:306px;color:#fff;">Vincular Nota Fiscal a um Pedido</div>
<div class="th" style="left:335.5px;top:325px;color:#000;">Conferência</div>
</body></html>
